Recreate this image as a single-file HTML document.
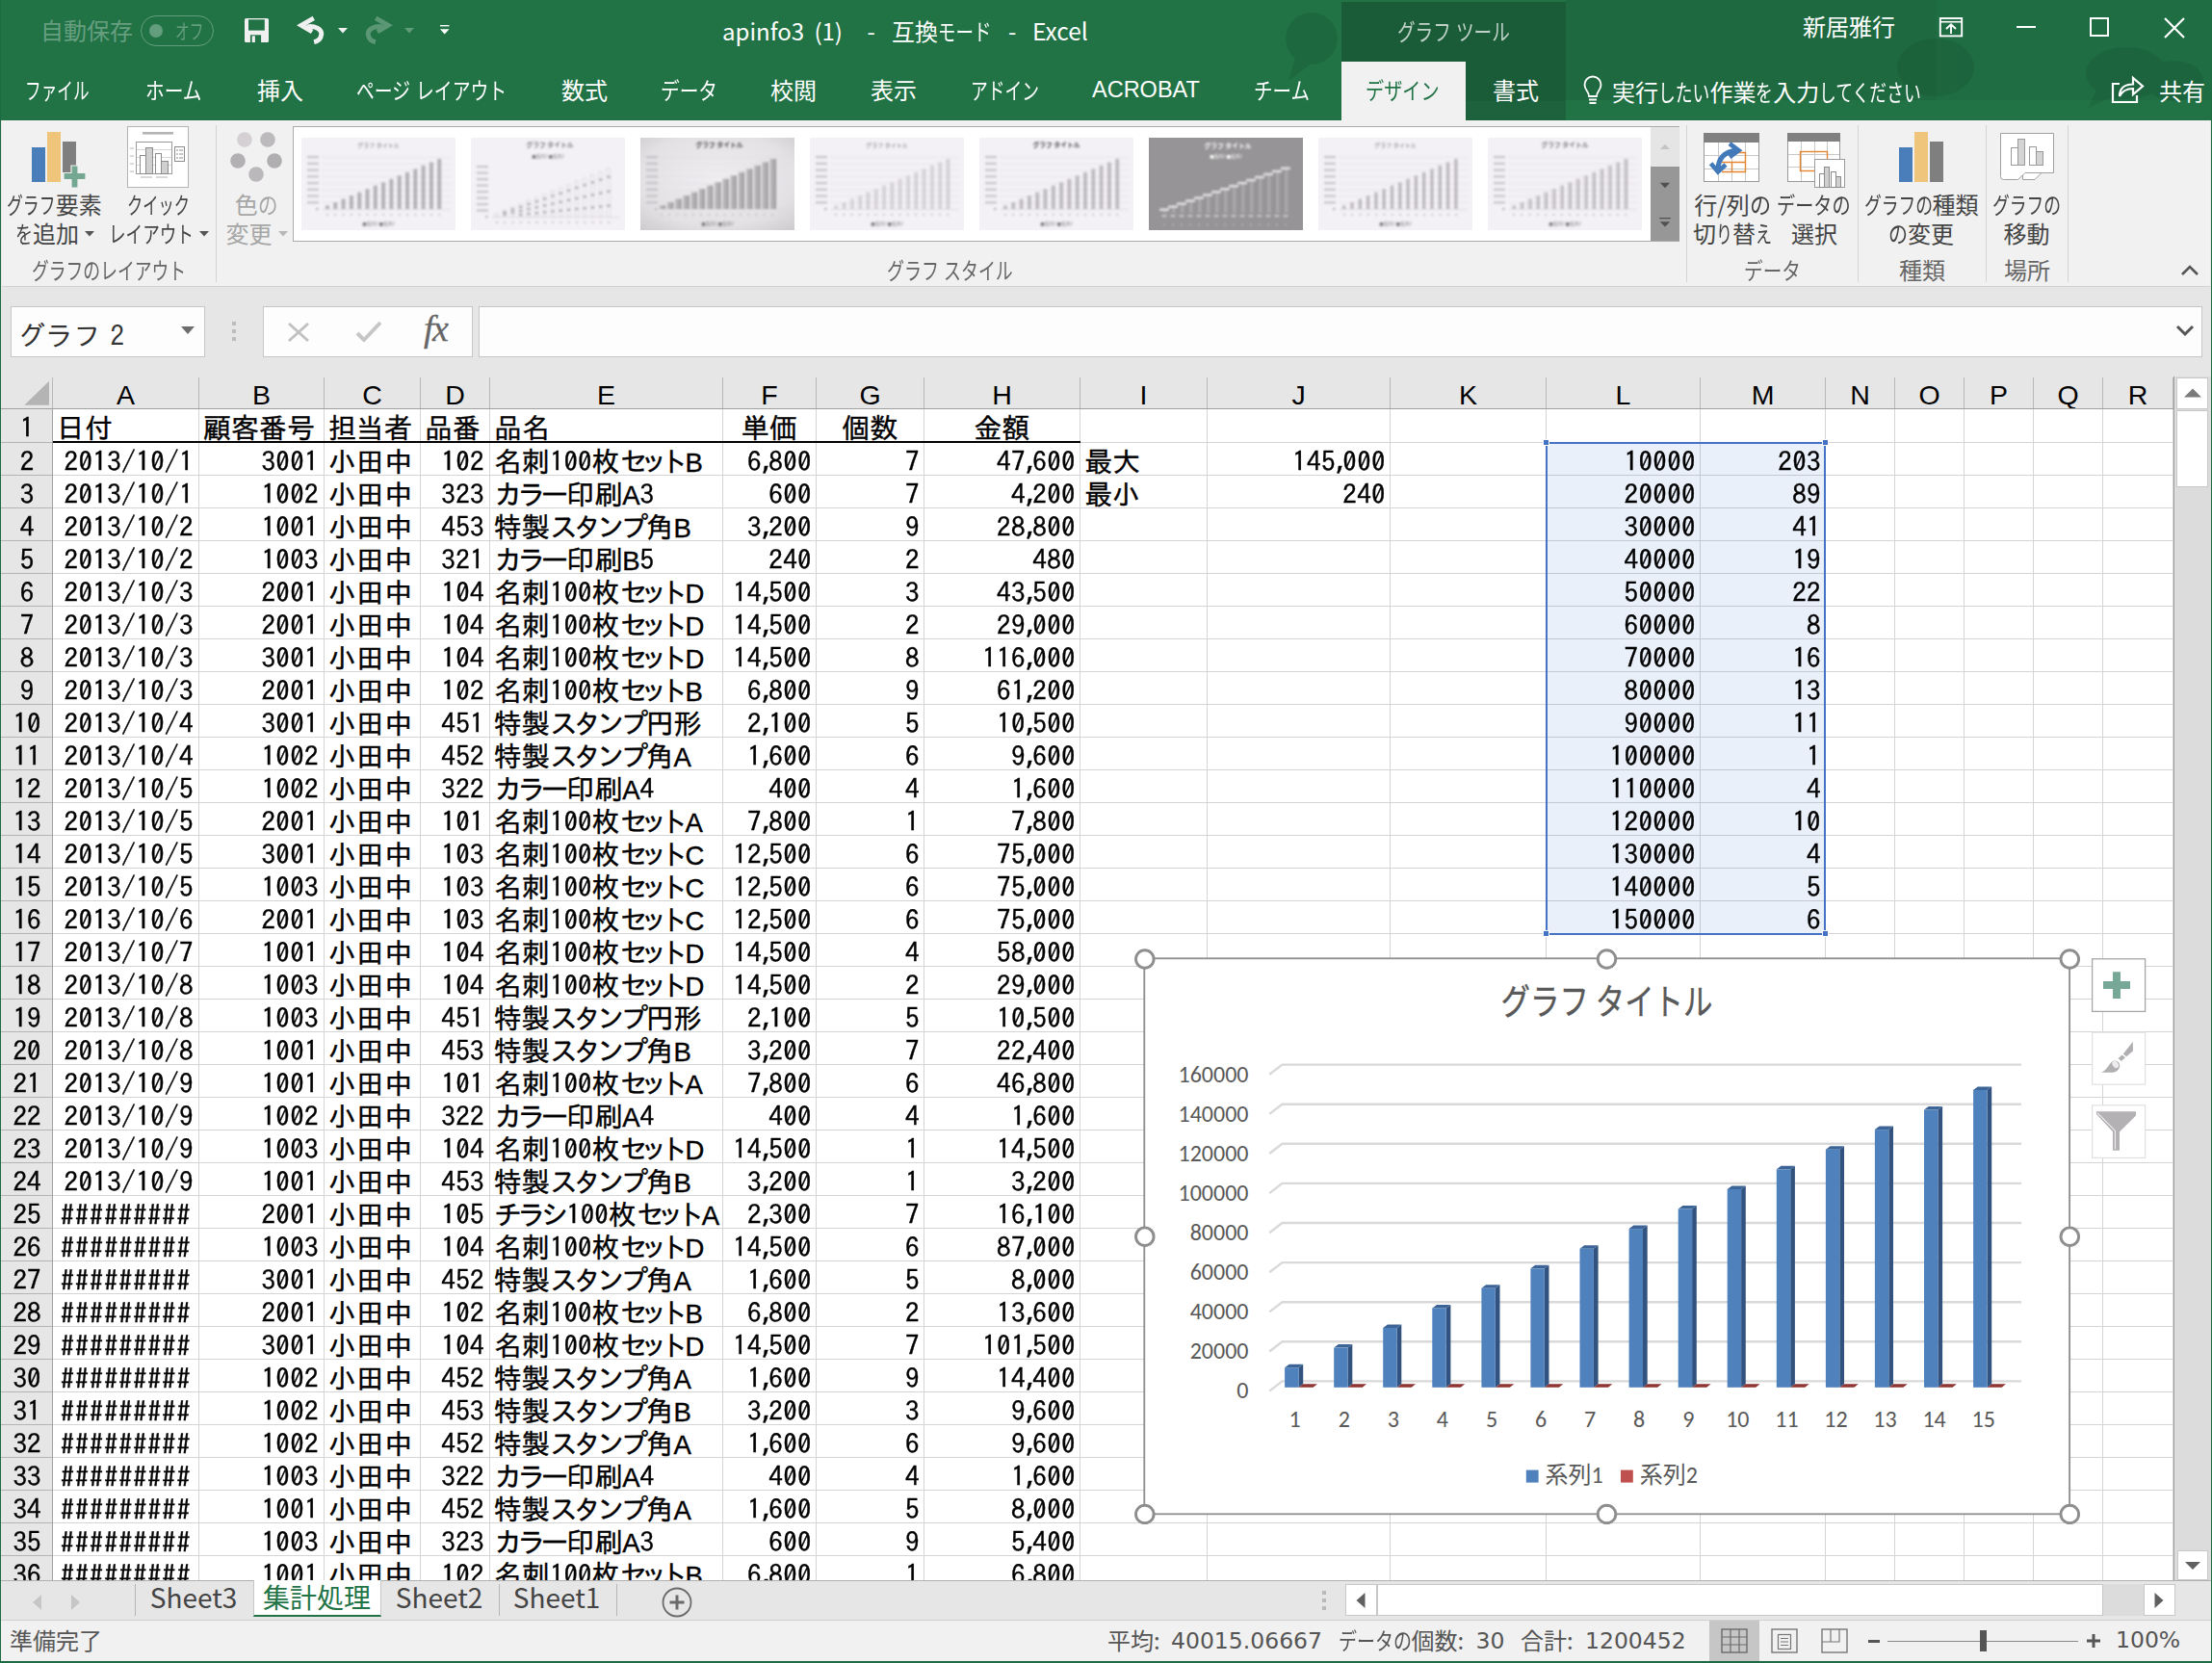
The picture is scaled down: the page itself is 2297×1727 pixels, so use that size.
<!DOCTYPE html><html lang="ja"><head><meta charset="utf-8"><title>Excel</title><style>
html,body{margin:0;padding:0}
body{width:2297px;height:1727px;position:relative;overflow:hidden;background:#e6e6e6;font-family:"Liberation Sans","Noto Sans CJK JP",sans-serif;font-size:24px;color:#444}
div,span,svg{box-sizing:border-box}
.a{position:absolute}
.k{display:inline-block;transform-origin:0 50%;white-space:nowrap;vertical-align:baseline}
.ui{font-family:"Noto Sans CJK JP","Liberation Sans",sans-serif;white-space:nowrap}
.t{position:absolute;white-space:nowrap;line-height:1}
.tab{position:absolute;top:78px;height:30px;line-height:30px;color:#fff;font-size:24px;white-space:nowrap;font-family:"Noto Sans CJK JP","Liberation Sans",sans-serif}
.rl{position:absolute;white-space:nowrap;text-align:center;font-size:24px;line-height:30px;color:#444;font-family:"Noto Sans CJK JP","Liberation Sans",sans-serif}
.gl{position:absolute;white-space:nowrap;text-align:center;font-size:24px;line-height:30px;color:#666;font-family:"Noto Sans CJK JP","Liberation Sans",sans-serif}
.sep{position:absolute;top:130px;height:163px;width:1px;background:#d4d4d4}
.g{font-family:"IPAGothic","Noto Sans CJK JP",monospace;font-size:29px;color:#000}
.c,.rh{-webkit-text-stroke:.38px #000}
.c{position:absolute;height:34px;line-height:38px;white-space:nowrap;overflow:hidden;padding:0 4px 0 4px;font-family:"IPAGothic","Noto Sans CJK JP",monospace;font-size:29px;color:#000}
.r{text-align:right}
.l{text-align:left}
.m{text-align:center}
.kk{letter-spacing:-4.600px;margin-right:2px}
.k2{letter-spacing:-8px;margin-right:5px}
.cm{letter-spacing:-7px}
.n,.rh{transform:scaleY(.92)}
.n{letter-spacing:.4px}
.dg{display:inline-block;transform:scaleY(.92)}
.hs{letter-spacing:.55px;display:inline-block;transform:scaleY(.82);transform-origin:50% 50%}
.la{font-family:"Liberation Sans",sans-serif;font-size:27.500px}
.vl{position:absolute;width:1px;background:#d4d4d4}
.hl{position:absolute;height:1px;background:#d4d4d4}
.ch{position:absolute;top:0;height:33px;line-height:38px;text-align:center;font-family:"Liberation Sans",sans-serif;font-size:28.500px;color:#000}
.rh{position:absolute;left:2px;width:52px;height:34px;line-height:38px;text-align:center;font-family:"IPAGothic",monospace;font-size:29px;color:#000}
</style></head><body><div class="a" style="left:0;top:0;width:2297px;height:125px;background:#217346;overflow:hidden"><svg class="a" style="left:1300px;top:0" width="997" height="125" viewBox="1300 0 997 125"><g fill="#000" opacity=".085"><circle cx="1362" cy="40" r="27"/><path d="M1345 60L1338 84L1362 66Z"/><rect x="1626" y="0" width="384" height="104"/></g><g fill="#000" opacity=".05"><rect x="2010" y="0" width="287" height="104"/></g><g fill="#000" opacity=".07"><ellipse cx="2208" cy="76" rx="42" ry="27"/><path d="M2178 92L2168 112L2196 100Z"/><ellipse cx="2258" cy="84" rx="30" ry="21"/><ellipse cx="2010" cy="70" rx="40" ry="30"/></g></svg><div class="a" style="left:1393px;top:2px;width:233px;height:123px;background:linear-gradient(180deg,rgba(0,0,0,.2) 0,rgba(0,0,0,.2) 103px,rgba(0,0,0,.15) 103px,rgba(0,0,0,.15) 100%)"></div><div class="a" style="left:1393px;top:64px;width:129px;height:61px;background:#f1f1f1"></div></div><div class="t ui" style="left:42px;top:18.500px;font-size:24px;color:rgba(255,255,255,.32)">自動保存</div><div class="a" style="left:146px;top:16px;width:76px;height:32px;border:1.5px solid rgba(255,255,255,.3);border-radius:16px"></div><div class="a" style="left:155px;top:25px;width:14px;height:14px;border-radius:7px;background:rgba(255,255,255,.3)"></div><div class="t ui" style="left:182px;top:21px;font-size:21px;color:rgba(255,255,255,.3)"><span class="k" style="width:29.4px;transform:scaleX(0.700)">オフ</span></div><svg class="a" style="left:254px;top:19px" width="26" height="26" viewBox="0 0 26 26"><rect x="0" y="0" width="25" height="25" rx="1.500" fill="#f0f0f0"/><rect x="4" y="1.300" width="16.800" height="11.300" fill="#217346"/><rect x="5.900" y="17.300" width="11.200" height="7.700" fill="#217346"/><rect x="7.700" y="18.300" width="3.200" height="6.700" fill="#f0f0f0"/></svg><svg class="a" style="left:308px;top:16px" width="32" height="30" viewBox="0 0 32 30"><path d="M17.800 2.900L4.900 10.200L16.100 17" fill="none" stroke="#f0f0f0" stroke-width="4.900" stroke-linejoin="miter"/><path d="M10.800 12C18.400 10.200 26.600 14.300 25.700 19.800C25.200 24.300 22 26.800 18.100 27.600" fill="none" stroke="#f0f0f0" stroke-width="4.900"/></svg><svg class="a" style="left:351px;top:29px" width="11" height="7"><path d="M0 0H10L5 5.500Z" fill="#f0f0f0"/></svg><svg class="a" style="left:376px;top:16px;opacity:.28" width="32" height="30" viewBox="0 0 32 30"><g transform="translate(32,0) scale(-1,1)"><path d="M17.800 2.900L4.900 10.200L16.100 17" fill="none" stroke="#f0f0f0" stroke-width="4.900" stroke-linejoin="miter"/><path d="M10.800 12C18.400 10.200 26.600 14.300 25.700 19.800C25.200 24.300 22 26.800 18.100 27.600" fill="none" stroke="#f0f0f0" stroke-width="4.900"/></g></svg><svg class="a" style="left:420px;top:29px;opacity:.28" width="11" height="7"><path d="M0 0H10L5 5.500Z" fill="#fff"/></svg><svg class="a" style="left:456px;top:25px" width="12" height="12"><rect x="1" y="1" width="9.500" height="1.400" fill="#fff"/><path d="M1 5.200H10.500L5.750 10.500Z" fill="#fff"/></svg><div class="t ui" style="left:750px;top:20px;font-size:24px;color:#fff;word-spacing:5px">apinfo3 (1)</div><div class="t ui" style="left:900.500px;top:20px;font-size:24px;color:#fff">-</div><div class="t ui" style="left:926px;top:20px;font-size:24px;color:#fff">互換<span class="k" style="width:55.5px;transform:scaleX(0.771)">モード</span></div><div class="t ui" style="left:1047px;top:20px;font-size:24px;color:#fff">-</div><div class="t ui" style="left:1072px;top:20px;font-size:24.500px;color:#fff">Excel</div><div class="t ui" style="left:1451px;top:20px;font-size:24px;color:rgba(255,255,255,.72)"><span class="k" style="width:55.8px;transform:scaleX(0.775)">グラフ</span> <span class="k" style="width:55.8px;transform:scaleX(0.775)">ツール</span></div><div class="t ui" style="left:1872px;top:15px;font-size:24px;color:#fff">新居雅行</div><svg class="a" style="left:2013px;top:17px" width="26" height="22" viewBox="0 0 26 22"><rect x="1.8" y="2" width="22.4" height="18.4" fill="none" stroke="#fff" stroke-width="1.9"/><path d="M1.8 5.7H24.2" stroke="#fff" stroke-width="1.6"/><path d="M13 18V8.5M8 13L13 8.2L18 13" fill="none" stroke="#fff" stroke-width="1.9"/></svg><div class="a" style="left:2094px;top:27px;width:20px;height:2px;background:#fff"></div><div class="a" style="left:2170px;top:18px;width:20px;height:20px;border:2px solid #fff"></div><svg class="a" style="left:2247px;top:18px" width="22" height="22"><path d="M1 1L21 21M21 1L1 21" stroke="#fff" stroke-width="2.2"/></svg><div class="tab" style="left:25.5px"><span class="k" style="width:66.5px;transform:scaleX(0.693)">ファイル</span></div><div class="tab" style="left:150.5px"><span class="k" style="width:59.0px;transform:scaleX(0.819)">ホーム</span></div><div class="tab" style="left:267.0px">挿入</div><div class="tab" style="left:370.0px"><span class="k" style="width:56.5px;transform:scaleX(0.784)">ページ</span> <span class="k" style="width:94.1px;transform:scaleX(0.784)">レイアウト</span></div><div class="tab" style="left:583.0px">数式</div><div class="tab" style="left:686.0px"><span class="k" style="width:59.0px;transform:scaleX(0.819)">データ</span></div><div class="tab" style="left:800.0px">校閲</div><div class="tab" style="left:904.0px">表示</div><div class="tab" style="left:1007.5px"><span class="k" style="width:71.0px;transform:scaleX(0.740)">アドイン</span></div><div class="tab" style="left:1134.0px;font-family:'Liberation Sans',sans-serif;font-size:23.500px">ACROBAT</div><div class="tab" style="left:1302.0px"><span class="k" style="width:58.5px;transform:scaleX(0.812)">チーム</span></div><div class="tab" style="left:1418px;color:#217346"><span class="k" style="width:76.5px;transform:scaleX(0.797)">デザイン</span></div><div class="tab" style="left:1550px">書式</div><svg class="a" style="left:1643px;top:78px" width="22" height="32" viewBox="0 0 22 32"><path d="M7 22C7 17 2.5 15.5 2.5 10A8.5 8.5 0 0 1 19.500 10C19.5 15.5 15 17 15 22Z" fill="none" stroke="#fff" stroke-width="1.8"/><path d="M7 25.500H15M7.500 29H14.500" stroke="#fff" stroke-width="1.8"/></svg><div class="tab" style="left:1674px;top:80px">実行<span class="k" style="width:53.4px;transform:scaleX(0.742)">したい</span>作業<span class="k" style="width:17.8px;transform:scaleX(0.742)">を</span>入力<span class="k" style="width:106.8px;transform:scaleX(0.742)">してください</span></div><svg class="a" style="left:2192px;top:78px" width="36" height="30" viewBox="0 0 36 30"><path d="M9 9H2V28H27V21" fill="none" stroke="#fff" stroke-width="2.2"/><path d="M9 22C9 13 15 9.500 23 9.500V3L33 11.500L23 20V14C16 14 12 16 9 22Z" fill="none" stroke="#fff" stroke-width="2.2" stroke-linejoin="miter"/></svg><div class="tab" style="left:2242px;top:79px">共有</div><div class="a" style="left:2px;top:125px;width:2293px;height:172px;background:#f1f1f1"></div><div class="a" style="left:2px;top:297px;width:2293px;height:1px;background:#d2d2d2"></div><svg class="a" style="left:30px;top:134px" width="62" height="64" viewBox="0 0 62 64"><rect x="3" y="19" width="14" height="36" fill="#4a7ebb"/><rect x="19" y="3" width="14" height="52" fill="#eec57a"/><rect x="35" y="13" width="14" height="32" fill="#7f7f7f"/><path d="M36 45.500H44V38H51V45.500H59V52.500H51V61H44V52.500H36Z" fill="#74a893" stroke="#f1f1f1" stroke-width="1.2"/></svg><div class="rl" style="left:-63.5px;top:196.5px;width:240px;"><span class="k" style="width:50.5px;transform:scaleX(0.701)">グラフ</span>要素</div><div class="rl" style="left:-63.0px;top:227.0px;width:240px;"><span class="k" style="width:18.0px;transform:scaleX(0.750)">を</span>追加<svg width="10" height="6" style="margin-left:6px;vertical-align:middle;position:relative;top:-2px"><path d="M0 0H10L5 5.5Z" fill="#555"/></svg></div><svg class="a" style="left:132px;top:131px" width="64" height="64" viewBox="0 0 64 64"><rect x=".5" y=".5" width="63" height="63" fill="#fff" stroke="#b4b4b4"/><rect x="16" y="6" width="32" height="2.600" fill="#b4b4b4"/><rect x="9.500" y="16.500" width="37" height="33" fill="#fff" stroke="#9a9a9a"/><path d="M10 24.500H46M10 32.500H46M10 40.500H46" stroke="#d8d8d8"/><rect x="13.500" y="30.500" width="6" height="19" fill="#fff" stroke="#8c8c8c"/><rect x="19.500" y="22.500" width="7" height="27" fill="#d0d0d0" stroke="#8c8c8c"/><rect x="29.500" y="28.500" width="6" height="21" fill="#fff" stroke="#8c8c8c"/><rect x="35.500" y="36.500" width="7" height="13" fill="#d0d0d0" stroke="#8c8c8c"/><path d="M3 23H7M3 31H7M3 39H7M3 47H7M14 53H26M30 53H42" stroke="#b4b4b4"/><rect x="49.500" y="21.500" width="10" height="15" fill="#fff" stroke="#8c8c8c"/><path d="M51 25H53M54 25H58M51 29H53M54 29H58M51 33H53M54 33H58" stroke="#8c8c8c"/></svg><div class="rl" style="left:44.5px;top:196.5px;width:240px;"><span class="k" style="width:65.0px;transform:scaleX(0.677)">クイック</span></div><div class="rl" style="left:44.5px;top:227.0px;width:240px;"><span class="k" style="width:88.0px;transform:scaleX(0.733)">レイアウト</span><svg width="10" height="6" style="margin-left:6px;vertical-align:middle;position:relative;top:-2px"><path d="M0 0H10L5 5.5Z" fill="#555"/></svg></div><div class="sep" style="left:224px"></div><svg class="a" style="left:236px;top:134px" width="60" height="58" viewBox="0 0 60 58"><circle cx="18" cy="11" r="7.800" fill="#d4d0d4"/><circle cx="42" cy="11" r="7.800" fill="#bcbabc"/><circle cx="11" cy="33" r="7.800" fill="#b2b0b2"/><circle cx="49" cy="33" r="7.800" fill="#b0aeb0"/><circle cx="30" cy="47" r="7.800" fill="#bab8ba"/></svg><div class="rl" style="left:146.0px;top:196.5px;width:240px;color:#a6a6a6">色<span class="k" style="width:20.5px;transform:scaleX(0.854)">の</span></div><div class="rl" style="left:146.5px;top:227.0px;width:240px;color:#a6a6a6">変更<svg width="10" height="6" style="margin-left:6px;vertical-align:middle;position:relative;top:-2px"><path d="M0 0H10L5 5.5Z" fill="#b8b8b8"/></svg></div><div class="gl" style="left:-7.0px;top:265.0px;width:240px;"><span class="k" style="width:160.0px;transform:scaleX(0.741)">グラフのレイアウト</span></div><div class="gl" style="left:866.0px;top:265.0px;width:240px;"><span class="k" style="width:53.8px;transform:scaleX(0.748)">グラフ</span> <span class="k" style="width:71.8px;transform:scaleX(0.748)">スタイル</span></div><div class="gl" style="left:1720.0px;top:265.0px;width:240px;"><span class="k" style="width:59.0px;transform:scaleX(0.819)">データ</span></div><div class="gl" style="left:1876.0px;top:265.0px;width:240px;">種類</div><div class="gl" style="left:1985.0px;top:265.0px;width:240px;">場所</div><div class="a" style="left:304px;top:131px;width:1440px;height:120px;background:#fff;border:1px solid #ababab"></div><div class="a" style="left:1714px;top:132px;width:30px;height:41px;background:#e5e5e5"></div><div class="a" style="left:1714px;top:173px;width:30px;height:77px;background:#979797"></div><svg class="a" style="left:1714px;top:132px" width="30" height="118"><path d="M10 23H20L15 17.8Z" fill="#c4c4c4"/><path d="M9.8 57.8H20.2L15 63.2Z" fill="#505050"/><path d="M9.2 94H20.8V95.2H9.2ZM9.8 98.2H20.2L15 103.4Z" fill="#505050"/></svg><svg class="a" style="left:313px;top:143px" width="160" height="96" viewBox="0 0 160 96"><rect width="160" height="96" fill="#f4f1f6"/><g style="filter:blur(.85px)"><text x="80" y="9.5" text-anchor="middle" font-size="6.0" fill="#7d7a7f" font-family="'Noto Sans CJK JP',sans-serif">グラフ タイトル</text><rect x="6" y="19.0" width="12" height="2.200" fill="#bcb9be" opacity=".8"/><rect x="22" y="20.0" width="132" height=".700" fill="#e2dfe4"/><rect x="6" y="25.8" width="12" height="2.200" fill="#bcb9be" opacity=".8"/><rect x="22" y="26.8" width="132" height=".700" fill="#e2dfe4"/><rect x="6" y="32.5" width="12" height="2.200" fill="#bcb9be" opacity=".8"/><rect x="22" y="33.5" width="132" height=".700" fill="#e2dfe4"/><rect x="6" y="39.2" width="12" height="2.200" fill="#bcb9be" opacity=".8"/><rect x="22" y="40.2" width="132" height=".700" fill="#e2dfe4"/><rect x="6" y="46.0" width="12" height="2.200" fill="#bcb9be" opacity=".8"/><rect x="22" y="47.0" width="132" height=".700" fill="#e2dfe4"/><rect x="6" y="52.8" width="12" height="2.200" fill="#bcb9be" opacity=".8"/><rect x="22" y="53.8" width="132" height=".700" fill="#e2dfe4"/><rect x="6" y="59.5" width="12" height="2.200" fill="#bcb9be" opacity=".8"/><rect x="22" y="60.5" width="132" height=".700" fill="#e2dfe4"/><rect x="6" y="66.2" width="12" height="2.200" fill="#bcb9be" opacity=".8"/><rect x="22" y="67.2" width="132" height=".700" fill="#e2dfe4"/><rect x="15" y="73.0" width="2.500" height="2.200" fill="#bcb9be"/><rect x="22" y="74.0" width="132" height=".700" fill="#d6d3d8"/><rect x="25.0" y="70.5" width="4.0" height="3.5" fill="#b4b1b6"/><rect x="26.0" y="79.0" width="2" height="1.800" fill="#c6c3c8"/><rect x="33.3" y="67.1" width="4.0" height="6.9" fill="#b4b1b6"/><rect x="34.3" y="79.0" width="2" height="1.800" fill="#c6c3c8"/><rect x="41.6" y="63.6" width="4.0" height="10.4" fill="#b4b1b6"/><rect x="42.6" y="79.0" width="2" height="1.800" fill="#c6c3c8"/><rect x="49.9" y="60.1" width="4.0" height="13.9" fill="#b4b1b6"/><rect x="50.9" y="79.0" width="2" height="1.800" fill="#c6c3c8"/><rect x="58.2" y="56.7" width="4.0" height="17.3" fill="#b4b1b6"/><rect x="59.2" y="79.0" width="2" height="1.800" fill="#c6c3c8"/><rect x="66.5" y="53.2" width="4.0" height="20.8" fill="#b4b1b6"/><rect x="67.5" y="79.0" width="2" height="1.800" fill="#c6c3c8"/><rect x="74.8" y="49.7" width="4.0" height="24.3" fill="#b4b1b6"/><rect x="75.8" y="79.0" width="2" height="1.800" fill="#c6c3c8"/><rect x="83.1" y="46.3" width="4.0" height="27.7" fill="#b4b1b6"/><rect x="84.1" y="79.0" width="2" height="1.800" fill="#c6c3c8"/><rect x="91.4" y="42.8" width="4.0" height="31.2" fill="#b4b1b6"/><rect x="92.4" y="79.0" width="2" height="1.800" fill="#c6c3c8"/><rect x="99.7" y="39.3" width="4.0" height="34.7" fill="#b4b1b6"/><rect x="100.7" y="79.0" width="2" height="1.800" fill="#c6c3c8"/><rect x="108.0" y="35.9" width="4.0" height="38.1" fill="#b4b1b6"/><rect x="109.0" y="79.0" width="2" height="1.800" fill="#c6c3c8"/><rect x="116.3" y="32.4" width="4.0" height="41.6" fill="#b4b1b6"/><rect x="117.3" y="79.0" width="2" height="1.800" fill="#c6c3c8"/><rect x="124.6" y="28.9" width="4.0" height="45.1" fill="#b4b1b6"/><rect x="125.6" y="79.0" width="2" height="1.800" fill="#c6c3c8"/><rect x="132.9" y="25.5" width="4.0" height="48.5" fill="#b4b1b6"/><rect x="133.9" y="79.0" width="2" height="1.800" fill="#c6c3c8"/><rect x="141.2" y="22.0" width="4.0" height="52.0" fill="#b4b1b6"/><rect x="142.2" y="79.0" width="2" height="1.800" fill="#c6c3c8"/><text x="80" y="90.500" text-anchor="middle" font-size="4.600" fill="#7d7a7f" font-family="'Noto Sans CJK JP',sans-serif">■系列1 ■系列2</text></g></svg><svg class="a" style="left:489px;top:143px" width="160" height="96" viewBox="0 0 160 96"><rect width="160" height="96" fill="#f4f1f6"/><g style="filter:blur(.85px)"><text x="82" y="9.5" text-anchor="middle" font-size="6.8" font-weight="bold" fill="#7d7a7f" font-family="'Noto Sans CJK JP',sans-serif">グラフ タイトル</text><text x="80" y="21" text-anchor="middle" font-size="4.600" fill="#7d7a7f" font-family="'Noto Sans CJK JP',sans-serif">■系列1 ■系列2</text><rect x="6" y="29.0" width="12" height="2.200" fill="#bcb9be" opacity=".8"/><rect x="6" y="35.5" width="12" height="2.200" fill="#bcb9be" opacity=".8"/><rect x="6" y="42.0" width="12" height="2.200" fill="#bcb9be" opacity=".8"/><rect x="6" y="48.5" width="12" height="2.200" fill="#bcb9be" opacity=".8"/><rect x="6" y="55.0" width="12" height="2.200" fill="#bcb9be" opacity=".8"/><rect x="6" y="61.5" width="12" height="2.200" fill="#bcb9be" opacity=".8"/><rect x="6" y="68.0" width="12" height="2.200" fill="#bcb9be" opacity=".8"/><rect x="6" y="74.5" width="12" height="2.200" fill="#bcb9be" opacity=".8"/><rect x="15" y="81.0" width="2.500" height="2.200" fill="#bcb9be"/><rect x="22" y="82.0" width="132" height=".700" fill="#d6d3d8"/><rect x="25.0" y="78.7" width="3.600" height="3.3" fill="none" stroke="#b5b2b7" stroke-width=".800" stroke-dasharray="1.200 1.600" opacity=".9"/><rect x="26.0" y="87.0" width="2" height="1.800" fill="#c6c3c8"/><rect x="33.3" y="75.3" width="3.600" height="6.7" fill="none" stroke="#b5b2b7" stroke-width=".800" stroke-dasharray="1.200 1.600" opacity=".9"/><rect x="33.5" y="78.3" width="3.200" height="2.400" fill="#98959a" opacity=".7"/><rect x="33.5" y="76.3" width="3.200" height="2.400" fill="#98959a" opacity=".7"/><rect x="34.3" y="87.0" width="2" height="1.800" fill="#c6c3c8"/><rect x="41.6" y="72.0" width="3.600" height="10.0" fill="none" stroke="#b5b2b7" stroke-width=".800" stroke-dasharray="1.200 1.600" opacity=".9"/><rect x="41.8" y="76.5" width="3.200" height="2.400" fill="#98959a" opacity=".7"/><rect x="41.8" y="73.5" width="3.200" height="2.400" fill="#98959a" opacity=".7"/><rect x="42.6" y="87.0" width="2" height="1.800" fill="#c6c3c8"/><rect x="49.9" y="68.7" width="3.600" height="13.3" fill="none" stroke="#b5b2b7" stroke-width=".800" stroke-dasharray="1.200 1.600" opacity=".9"/><rect x="50.1" y="78.7" width="3.200" height="2.400" fill="#98959a" opacity=".7"/><rect x="50.1" y="74.7" width="3.200" height="2.400" fill="#98959a" opacity=".7"/><rect x="50.1" y="70.7" width="3.200" height="2.400" fill="#98959a" opacity=".7"/><rect x="50.9" y="87.0" width="2" height="1.800" fill="#c6c3c8"/><rect x="58.2" y="65.3" width="3.600" height="16.7" fill="none" stroke="#b5b2b7" stroke-width=".800" stroke-dasharray="1.200 1.600" opacity=".9"/><rect x="58.4" y="77.8" width="3.200" height="2.400" fill="#98959a" opacity=".7"/><rect x="58.4" y="72.8" width="3.200" height="2.400" fill="#98959a" opacity=".7"/><rect x="58.4" y="67.8" width="3.200" height="2.400" fill="#98959a" opacity=".7"/><rect x="59.2" y="87.0" width="2" height="1.800" fill="#c6c3c8"/><rect x="66.5" y="62.0" width="3.600" height="20.0" fill="none" stroke="#b5b2b7" stroke-width=".800" stroke-dasharray="1.200 1.600" opacity=".9"/><rect x="66.7" y="77.0" width="3.200" height="2.400" fill="#98959a" opacity=".7"/><rect x="66.7" y="71.0" width="3.200" height="2.400" fill="#98959a" opacity=".7"/><rect x="66.7" y="65.0" width="3.200" height="2.400" fill="#98959a" opacity=".7"/><rect x="67.5" y="87.0" width="2" height="1.800" fill="#c6c3c8"/><rect x="74.8" y="58.7" width="3.600" height="23.3" fill="none" stroke="#b5b2b7" stroke-width=".800" stroke-dasharray="1.200 1.600" opacity=".9"/><rect x="75.0" y="76.2" width="3.200" height="2.400" fill="#98959a" opacity=".7"/><rect x="75.0" y="69.2" width="3.200" height="2.400" fill="#98959a" opacity=".7"/><rect x="75.0" y="62.2" width="3.200" height="2.400" fill="#98959a" opacity=".7"/><rect x="75.8" y="87.0" width="2" height="1.800" fill="#c6c3c8"/><rect x="83.1" y="55.3" width="3.600" height="26.7" fill="none" stroke="#b5b2b7" stroke-width=".800" stroke-dasharray="1.200 1.600" opacity=".9"/><rect x="83.3" y="75.3" width="3.200" height="2.400" fill="#98959a" opacity=".7"/><rect x="83.3" y="67.3" width="3.200" height="2.400" fill="#98959a" opacity=".7"/><rect x="83.3" y="59.3" width="3.200" height="2.400" fill="#98959a" opacity=".7"/><rect x="84.1" y="87.0" width="2" height="1.800" fill="#c6c3c8"/><rect x="91.4" y="52.0" width="3.600" height="30.0" fill="none" stroke="#b5b2b7" stroke-width=".800" stroke-dasharray="1.200 1.600" opacity=".9"/><rect x="91.6" y="74.5" width="3.200" height="2.400" fill="#98959a" opacity=".7"/><rect x="91.6" y="65.5" width="3.200" height="2.400" fill="#98959a" opacity=".7"/><rect x="91.6" y="56.5" width="3.200" height="2.400" fill="#98959a" opacity=".7"/><rect x="92.4" y="87.0" width="2" height="1.800" fill="#c6c3c8"/><rect x="99.7" y="48.7" width="3.600" height="33.3" fill="none" stroke="#b5b2b7" stroke-width=".800" stroke-dasharray="1.200 1.600" opacity=".9"/><rect x="99.9" y="73.7" width="3.200" height="2.400" fill="#98959a" opacity=".7"/><rect x="99.9" y="63.7" width="3.200" height="2.400" fill="#98959a" opacity=".7"/><rect x="99.9" y="53.7" width="3.200" height="2.400" fill="#98959a" opacity=".7"/><rect x="100.7" y="87.0" width="2" height="1.800" fill="#c6c3c8"/><rect x="108.0" y="45.3" width="3.600" height="36.7" fill="none" stroke="#b5b2b7" stroke-width=".800" stroke-dasharray="1.200 1.600" opacity=".9"/><rect x="108.2" y="72.8" width="3.200" height="2.400" fill="#98959a" opacity=".7"/><rect x="108.2" y="61.8" width="3.200" height="2.400" fill="#98959a" opacity=".7"/><rect x="108.2" y="50.8" width="3.200" height="2.400" fill="#98959a" opacity=".7"/><rect x="109.0" y="87.0" width="2" height="1.800" fill="#c6c3c8"/><rect x="116.3" y="42.0" width="3.600" height="40.0" fill="none" stroke="#b5b2b7" stroke-width=".800" stroke-dasharray="1.200 1.600" opacity=".9"/><rect x="116.5" y="72.0" width="3.200" height="2.400" fill="#98959a" opacity=".7"/><rect x="116.5" y="60.0" width="3.200" height="2.400" fill="#98959a" opacity=".7"/><rect x="116.5" y="48.0" width="3.200" height="2.400" fill="#98959a" opacity=".7"/><rect x="117.3" y="87.0" width="2" height="1.800" fill="#c6c3c8"/><rect x="124.6" y="38.7" width="3.600" height="43.3" fill="none" stroke="#b5b2b7" stroke-width=".800" stroke-dasharray="1.200 1.600" opacity=".9"/><rect x="124.8" y="71.2" width="3.200" height="2.400" fill="#98959a" opacity=".7"/><rect x="124.8" y="58.2" width="3.200" height="2.400" fill="#98959a" opacity=".7"/><rect x="124.8" y="45.2" width="3.200" height="2.400" fill="#98959a" opacity=".7"/><rect x="125.6" y="87.0" width="2" height="1.800" fill="#c6c3c8"/><rect x="132.9" y="35.3" width="3.600" height="46.7" fill="none" stroke="#b5b2b7" stroke-width=".800" stroke-dasharray="1.200 1.600" opacity=".9"/><rect x="133.1" y="70.3" width="3.200" height="2.400" fill="#98959a" opacity=".7"/><rect x="133.1" y="56.3" width="3.200" height="2.400" fill="#98959a" opacity=".7"/><rect x="133.1" y="42.3" width="3.200" height="2.400" fill="#98959a" opacity=".7"/><rect x="133.9" y="87.0" width="2" height="1.800" fill="#c6c3c8"/><rect x="141.2" y="32.0" width="3.600" height="50.0" fill="none" stroke="#b5b2b7" stroke-width=".800" stroke-dasharray="1.200 1.600" opacity=".9"/><rect x="141.4" y="69.5" width="3.200" height="2.400" fill="#98959a" opacity=".7"/><rect x="141.4" y="54.5" width="3.200" height="2.400" fill="#98959a" opacity=".7"/><rect x="141.4" y="39.5" width="3.200" height="2.400" fill="#98959a" opacity=".7"/><rect x="142.2" y="87.0" width="2" height="1.800" fill="#c6c3c8"/></g></svg><svg class="a" style="left:665px;top:143px" width="160" height="96" viewBox="0 0 160 96"><defs><radialGradient id="tg" cx="50%" cy="45%" r="78%"><stop offset="0" stop-color="#f0eef1"/><stop offset=".65" stop-color="#e3e1e4"/><stop offset="1" stop-color="#c9c7ca"/></radialGradient></defs><rect width="160" height="96" fill="url(#tg)"/><g style="filter:blur(.85px)"><text x="82" y="9.5" text-anchor="middle" font-size="6.8" font-weight="bold" fill="#4a484a" font-family="'Noto Sans CJK JP',sans-serif">グラフ タイトル</text><rect x="6" y="19.0" width="12" height="2.200" fill="#bcb9be" opacity=".8"/><rect x="22" y="20.0" width="132" height=".700" fill="#e2dfe4"/><rect x="6" y="25.8" width="12" height="2.200" fill="#bcb9be" opacity=".8"/><rect x="22" y="26.8" width="132" height=".700" fill="#e2dfe4"/><rect x="6" y="32.5" width="12" height="2.200" fill="#bcb9be" opacity=".8"/><rect x="22" y="33.5" width="132" height=".700" fill="#e2dfe4"/><rect x="6" y="39.2" width="12" height="2.200" fill="#bcb9be" opacity=".8"/><rect x="22" y="40.2" width="132" height=".700" fill="#e2dfe4"/><rect x="6" y="46.0" width="12" height="2.200" fill="#bcb9be" opacity=".8"/><rect x="22" y="47.0" width="132" height=".700" fill="#e2dfe4"/><rect x="6" y="52.8" width="12" height="2.200" fill="#bcb9be" opacity=".8"/><rect x="22" y="53.8" width="132" height=".700" fill="#e2dfe4"/><rect x="6" y="59.5" width="12" height="2.200" fill="#bcb9be" opacity=".8"/><rect x="22" y="60.5" width="132" height=".700" fill="#e2dfe4"/><rect x="6" y="66.2" width="12" height="2.200" fill="#bcb9be" opacity=".8"/><rect x="22" y="67.2" width="132" height=".700" fill="#e2dfe4"/><rect x="15" y="73.0" width="2.500" height="2.200" fill="#bcb9be"/><rect x="22" y="74.0" width="132" height=".700" fill="#d6d3d8"/><rect x="20.0" y="70.5" width="6" height="3.5" fill="#b3b1b3"/><rect x="24.4" y="70.5" width="1.600" height="3.5" fill="#979597"/><rect x="21.0" y="79.0" width="2" height="1.800" fill="#c6c3c8"/><rect x="28.2" y="67.1" width="6" height="6.9" fill="#b3b1b3"/><rect x="32.6" y="67.1" width="1.600" height="6.9" fill="#979597"/><rect x="29.2" y="79.0" width="2" height="1.800" fill="#c6c3c8"/><rect x="36.4" y="63.6" width="6" height="10.4" fill="#b3b1b3"/><rect x="40.8" y="63.6" width="1.600" height="10.4" fill="#979597"/><rect x="37.4" y="79.0" width="2" height="1.800" fill="#c6c3c8"/><rect x="44.6" y="60.1" width="6" height="13.9" fill="#b3b1b3"/><rect x="49.0" y="60.1" width="1.600" height="13.9" fill="#979597"/><rect x="45.6" y="79.0" width="2" height="1.800" fill="#c6c3c8"/><rect x="52.8" y="56.7" width="6" height="17.3" fill="#b3b1b3"/><rect x="57.2" y="56.7" width="1.600" height="17.3" fill="#979597"/><rect x="53.8" y="79.0" width="2" height="1.800" fill="#c6c3c8"/><rect x="61.0" y="53.2" width="6" height="20.8" fill="#b3b1b3"/><rect x="65.4" y="53.2" width="1.600" height="20.8" fill="#979597"/><rect x="62.0" y="79.0" width="2" height="1.800" fill="#c6c3c8"/><rect x="69.2" y="49.7" width="6" height="24.3" fill="#b3b1b3"/><rect x="73.6" y="49.7" width="1.600" height="24.3" fill="#979597"/><rect x="70.2" y="79.0" width="2" height="1.800" fill="#c6c3c8"/><rect x="77.4" y="46.3" width="6" height="27.7" fill="#b3b1b3"/><rect x="81.8" y="46.3" width="1.600" height="27.7" fill="#979597"/><rect x="78.4" y="79.0" width="2" height="1.800" fill="#c6c3c8"/><rect x="85.6" y="42.8" width="6" height="31.2" fill="#b3b1b3"/><rect x="90.0" y="42.8" width="1.600" height="31.2" fill="#979597"/><rect x="86.6" y="79.0" width="2" height="1.800" fill="#c6c3c8"/><rect x="93.8" y="39.3" width="6" height="34.7" fill="#b3b1b3"/><rect x="98.2" y="39.3" width="1.600" height="34.7" fill="#979597"/><rect x="94.8" y="79.0" width="2" height="1.800" fill="#c6c3c8"/><rect x="102.0" y="35.9" width="6" height="38.1" fill="#b3b1b3"/><rect x="106.4" y="35.9" width="1.600" height="38.1" fill="#979597"/><rect x="103.0" y="79.0" width="2" height="1.800" fill="#c6c3c8"/><rect x="110.2" y="32.4" width="6" height="41.6" fill="#b3b1b3"/><rect x="114.6" y="32.4" width="1.600" height="41.6" fill="#979597"/><rect x="111.2" y="79.0" width="2" height="1.800" fill="#c6c3c8"/><rect x="118.4" y="28.9" width="6" height="45.1" fill="#b3b1b3"/><rect x="122.8" y="28.9" width="1.600" height="45.1" fill="#979597"/><rect x="119.4" y="79.0" width="2" height="1.800" fill="#c6c3c8"/><rect x="126.6" y="25.5" width="6" height="48.5" fill="#b3b1b3"/><rect x="131.0" y="25.5" width="1.600" height="48.5" fill="#979597"/><rect x="127.6" y="79.0" width="2" height="1.800" fill="#c6c3c8"/><rect x="134.8" y="22.0" width="6" height="52.0" fill="#b3b1b3"/><rect x="139.2" y="22.0" width="1.600" height="52.0" fill="#979597"/><rect x="135.8" y="79.0" width="2" height="1.800" fill="#c6c3c8"/><text x="80" y="90.500" text-anchor="middle" font-size="4.600" fill="#7d7a7f" font-family="'Noto Sans CJK JP',sans-serif">■系列1 ■系列2</text></g></svg><svg class="a" style="left:841px;top:143px" width="160" height="96" viewBox="0 0 160 96"><rect width="160" height="96" fill="#f4f1f6"/><g style="filter:blur(.85px)"><text x="80" y="9.5" text-anchor="middle" font-size="6.0" fill="#7d7a7f" font-family="'Noto Sans CJK JP',sans-serif">グラフ タイトル</text><rect x="6" y="19.0" width="12" height="2.200" fill="#bcb9be" opacity=".8"/><rect x="22" y="20.0" width="132" height=".700" fill="#e2dfe4"/><rect x="6" y="25.8" width="12" height="2.200" fill="#bcb9be" opacity=".8"/><rect x="22" y="26.8" width="132" height=".700" fill="#e2dfe4"/><rect x="6" y="32.5" width="12" height="2.200" fill="#bcb9be" opacity=".8"/><rect x="22" y="33.5" width="132" height=".700" fill="#e2dfe4"/><rect x="6" y="39.2" width="12" height="2.200" fill="#bcb9be" opacity=".8"/><rect x="22" y="40.2" width="132" height=".700" fill="#e2dfe4"/><rect x="6" y="46.0" width="12" height="2.200" fill="#bcb9be" opacity=".8"/><rect x="22" y="47.0" width="132" height=".700" fill="#e2dfe4"/><rect x="6" y="52.8" width="12" height="2.200" fill="#bcb9be" opacity=".8"/><rect x="22" y="53.8" width="132" height=".700" fill="#e2dfe4"/><rect x="6" y="59.5" width="12" height="2.200" fill="#bcb9be" opacity=".8"/><rect x="22" y="60.5" width="132" height=".700" fill="#e2dfe4"/><rect x="6" y="66.2" width="12" height="2.200" fill="#bcb9be" opacity=".8"/><rect x="22" y="67.2" width="132" height=".700" fill="#e2dfe4"/><rect x="15" y="73.0" width="2.500" height="2.200" fill="#bcb9be"/><rect x="22" y="74.0" width="132" height=".700" fill="#d6d3d8"/><rect x="25.0" y="70.5" width="4.0" height="3.5" fill="#cdcacf"/><rect x="25.4" y="70.5" width="1.600" height="3.5" fill="#e8e5ea" opacity=".7"/><rect x="26.0" y="79.0" width="2" height="1.800" fill="#c6c3c8"/><rect x="33.3" y="67.1" width="4.0" height="6.9" fill="#cdcacf"/><rect x="33.7" y="67.1" width="1.600" height="6.9" fill="#e8e5ea" opacity=".7"/><rect x="34.3" y="79.0" width="2" height="1.800" fill="#c6c3c8"/><rect x="41.6" y="63.6" width="4.0" height="10.4" fill="#cdcacf"/><rect x="42.0" y="63.6" width="1.600" height="10.4" fill="#e8e5ea" opacity=".7"/><rect x="42.6" y="79.0" width="2" height="1.800" fill="#c6c3c8"/><rect x="49.9" y="60.1" width="4.0" height="13.9" fill="#cdcacf"/><rect x="50.3" y="60.1" width="1.600" height="13.9" fill="#e8e5ea" opacity=".7"/><rect x="50.9" y="79.0" width="2" height="1.800" fill="#c6c3c8"/><rect x="58.2" y="56.7" width="4.0" height="17.3" fill="#cdcacf"/><rect x="58.6" y="56.7" width="1.600" height="17.3" fill="#e8e5ea" opacity=".7"/><rect x="59.2" y="79.0" width="2" height="1.800" fill="#c6c3c8"/><rect x="66.5" y="53.2" width="4.0" height="20.8" fill="#cdcacf"/><rect x="66.9" y="53.2" width="1.600" height="20.8" fill="#e8e5ea" opacity=".7"/><rect x="67.5" y="79.0" width="2" height="1.800" fill="#c6c3c8"/><rect x="74.8" y="49.7" width="4.0" height="24.3" fill="#cdcacf"/><rect x="75.2" y="49.7" width="1.600" height="24.3" fill="#e8e5ea" opacity=".7"/><rect x="75.8" y="79.0" width="2" height="1.800" fill="#c6c3c8"/><rect x="83.1" y="46.3" width="4.0" height="27.7" fill="#cdcacf"/><rect x="83.5" y="46.3" width="1.600" height="27.7" fill="#e8e5ea" opacity=".7"/><rect x="84.1" y="79.0" width="2" height="1.800" fill="#c6c3c8"/><rect x="91.4" y="42.8" width="4.0" height="31.2" fill="#cdcacf"/><rect x="91.8" y="42.8" width="1.600" height="31.2" fill="#e8e5ea" opacity=".7"/><rect x="92.4" y="79.0" width="2" height="1.800" fill="#c6c3c8"/><rect x="99.7" y="39.3" width="4.0" height="34.7" fill="#cdcacf"/><rect x="100.1" y="39.3" width="1.600" height="34.7" fill="#e8e5ea" opacity=".7"/><rect x="100.7" y="79.0" width="2" height="1.800" fill="#c6c3c8"/><rect x="108.0" y="35.9" width="4.0" height="38.1" fill="#cdcacf"/><rect x="108.4" y="35.9" width="1.600" height="38.1" fill="#e8e5ea" opacity=".7"/><rect x="109.0" y="79.0" width="2" height="1.800" fill="#c6c3c8"/><rect x="116.3" y="32.4" width="4.0" height="41.6" fill="#cdcacf"/><rect x="116.7" y="32.4" width="1.600" height="41.6" fill="#e8e5ea" opacity=".7"/><rect x="117.3" y="79.0" width="2" height="1.800" fill="#c6c3c8"/><rect x="124.6" y="28.9" width="4.0" height="45.1" fill="#cdcacf"/><rect x="125.0" y="28.9" width="1.600" height="45.1" fill="#e8e5ea" opacity=".7"/><rect x="125.6" y="79.0" width="2" height="1.800" fill="#c6c3c8"/><rect x="132.9" y="25.5" width="4.0" height="48.5" fill="#cdcacf"/><rect x="133.3" y="25.5" width="1.600" height="48.5" fill="#e8e5ea" opacity=".7"/><rect x="133.9" y="79.0" width="2" height="1.800" fill="#c6c3c8"/><rect x="141.2" y="22.0" width="4.0" height="52.0" fill="#cdcacf"/><rect x="141.6" y="22.0" width="1.600" height="52.0" fill="#e8e5ea" opacity=".7"/><rect x="142.2" y="79.0" width="2" height="1.800" fill="#c6c3c8"/><text x="80" y="90.500" text-anchor="middle" font-size="4.600" fill="#7d7a7f" font-family="'Noto Sans CJK JP',sans-serif">■系列1 ■系列2</text></g></svg><svg class="a" style="left:1017px;top:143px" width="160" height="96" viewBox="0 0 160 96"><rect width="160" height="96" fill="#f4f1f6"/><g style="filter:blur(.85px)"><text x="80" y="9.5" text-anchor="middle" font-size="6.8" font-weight="bold" fill="#4a484a" font-family="'Noto Sans CJK JP',sans-serif">グラフ タイトル</text><rect x="6" y="19.0" width="12" height="2.200" fill="#bcb9be" opacity=".8"/><rect x="22" y="20.0" width="132" height=".700" fill="#e2dfe4"/><rect x="6" y="25.8" width="12" height="2.200" fill="#bcb9be" opacity=".8"/><rect x="22" y="26.8" width="132" height=".700" fill="#e2dfe4"/><rect x="6" y="32.5" width="12" height="2.200" fill="#bcb9be" opacity=".8"/><rect x="22" y="33.5" width="132" height=".700" fill="#e2dfe4"/><rect x="6" y="39.2" width="12" height="2.200" fill="#bcb9be" opacity=".8"/><rect x="22" y="40.2" width="132" height=".700" fill="#e2dfe4"/><rect x="6" y="46.0" width="12" height="2.200" fill="#bcb9be" opacity=".8"/><rect x="22" y="47.0" width="132" height=".700" fill="#e2dfe4"/><rect x="6" y="52.8" width="12" height="2.200" fill="#bcb9be" opacity=".8"/><rect x="22" y="53.8" width="132" height=".700" fill="#e2dfe4"/><rect x="6" y="59.5" width="12" height="2.200" fill="#bcb9be" opacity=".8"/><rect x="22" y="60.5" width="132" height=".700" fill="#e2dfe4"/><rect x="6" y="66.2" width="12" height="2.200" fill="#bcb9be" opacity=".8"/><rect x="22" y="67.2" width="132" height=".700" fill="#e2dfe4"/><rect x="15" y="73.0" width="2.500" height="2.200" fill="#bcb9be"/><rect x="22" y="74.0" width="132" height=".700" fill="#d6d3d8"/><rect x="25.0" y="70.5" width="4.0" height="3.5" fill="#bebbc0"/><rect x="26.0" y="79.0" width="2" height="1.800" fill="#c6c3c8"/><rect x="33.3" y="67.1" width="4.0" height="6.9" fill="#bebbc0"/><rect x="34.3" y="79.0" width="2" height="1.800" fill="#c6c3c8"/><rect x="41.6" y="63.6" width="4.0" height="10.4" fill="#bebbc0"/><rect x="42.6" y="79.0" width="2" height="1.800" fill="#c6c3c8"/><rect x="49.9" y="60.1" width="4.0" height="13.9" fill="#bebbc0"/><rect x="50.9" y="79.0" width="2" height="1.800" fill="#c6c3c8"/><rect x="58.2" y="56.7" width="4.0" height="17.3" fill="#bebbc0"/><rect x="59.2" y="79.0" width="2" height="1.800" fill="#c6c3c8"/><rect x="66.5" y="53.2" width="4.0" height="20.8" fill="#bebbc0"/><rect x="67.5" y="79.0" width="2" height="1.800" fill="#c6c3c8"/><rect x="74.8" y="49.7" width="4.0" height="24.3" fill="#bebbc0"/><rect x="75.8" y="79.0" width="2" height="1.800" fill="#c6c3c8"/><rect x="83.1" y="46.3" width="4.0" height="27.7" fill="#bebbc0"/><rect x="84.1" y="79.0" width="2" height="1.800" fill="#c6c3c8"/><rect x="91.4" y="42.8" width="4.0" height="31.2" fill="#bebbc0"/><rect x="92.4" y="79.0" width="2" height="1.800" fill="#c6c3c8"/><rect x="99.7" y="39.3" width="4.0" height="34.7" fill="#bebbc0"/><rect x="100.7" y="79.0" width="2" height="1.800" fill="#c6c3c8"/><rect x="108.0" y="35.9" width="4.0" height="38.1" fill="#bebbc0"/><rect x="109.0" y="79.0" width="2" height="1.800" fill="#c6c3c8"/><rect x="116.3" y="32.4" width="4.0" height="41.6" fill="#bebbc0"/><rect x="117.3" y="79.0" width="2" height="1.800" fill="#c6c3c8"/><rect x="124.6" y="28.9" width="4.0" height="45.1" fill="#bebbc0"/><rect x="125.6" y="79.0" width="2" height="1.800" fill="#c6c3c8"/><rect x="132.9" y="25.5" width="4.0" height="48.5" fill="#bebbc0"/><rect x="133.9" y="79.0" width="2" height="1.800" fill="#c6c3c8"/><rect x="141.2" y="22.0" width="4.0" height="52.0" fill="#bebbc0"/><rect x="142.2" y="79.0" width="2" height="1.800" fill="#c6c3c8"/><text x="80" y="90.500" text-anchor="middle" font-size="4.600" fill="#7d7a7f" font-family="'Noto Sans CJK JP',sans-serif">■系列1 ■系列2</text></g></svg><svg class="a" style="left:1193px;top:143px" width="160" height="96" viewBox="0 0 160 96"><rect width="160" height="96" fill="#969496"/><g style="filter:blur(.85px)"><text x="82" y="10.5" text-anchor="middle" font-size="6.8" font-weight="bold" fill="#fff" font-family="'Noto Sans CJK JP',sans-serif">グラフ タイトル</text><text x="80" y="21" text-anchor="middle" font-size="4.600" fill="#fff" font-family="'Noto Sans CJK JP',sans-serif">■系列1 ■系列2</text><rect x="15.0" y="74.9" width="3.500" height="3.1" fill="#aeacae" opacity=".8"/><rect x="11.0" y="73.4" width="10" height="2.600" fill="#e8e6e8" opacity=".9"/><rect x="13.5" y="80" width="5" height="2.400" fill="#d2d0d2" opacity=".8"/><rect x="15.0" y="89.500" width="2" height="1.800" fill="#bcbabc" opacity=".8"/><rect x="24.0" y="71.9" width="3.500" height="6.1" fill="#aeacae" opacity=".8"/><rect x="20.0" y="70.4" width="10" height="2.600" fill="#e8e6e8" opacity=".9"/><rect x="22.5" y="80" width="5" height="2.400" fill="#d2d0d2" opacity=".8"/><rect x="24.0" y="89.500" width="2" height="1.800" fill="#bcbabc" opacity=".8"/><rect x="33.0" y="68.8" width="3.500" height="9.2" fill="#aeacae" opacity=".8"/><rect x="29.0" y="67.3" width="10" height="2.600" fill="#e8e6e8" opacity=".9"/><rect x="31.5" y="80" width="5" height="2.400" fill="#d2d0d2" opacity=".8"/><rect x="33.0" y="89.500" width="2" height="1.800" fill="#bcbabc" opacity=".8"/><rect x="42.0" y="65.7" width="3.500" height="12.3" fill="#aeacae" opacity=".8"/><rect x="38.0" y="64.2" width="10" height="2.600" fill="#e8e6e8" opacity=".9"/><rect x="40.5" y="80" width="5" height="2.400" fill="#d2d0d2" opacity=".8"/><rect x="42.0" y="89.500" width="2" height="1.800" fill="#bcbabc" opacity=".8"/><rect x="51.0" y="62.7" width="3.500" height="15.3" fill="#aeacae" opacity=".8"/><rect x="47.0" y="61.2" width="10" height="2.600" fill="#e8e6e8" opacity=".9"/><rect x="49.5" y="80" width="5" height="2.400" fill="#d2d0d2" opacity=".8"/><rect x="51.0" y="89.500" width="2" height="1.800" fill="#bcbabc" opacity=".8"/><rect x="60.0" y="59.6" width="3.500" height="18.4" fill="#aeacae" opacity=".8"/><rect x="56.0" y="58.1" width="10" height="2.600" fill="#e8e6e8" opacity=".9"/><rect x="58.5" y="80" width="5" height="2.400" fill="#d2d0d2" opacity=".8"/><rect x="60.0" y="89.500" width="2" height="1.800" fill="#bcbabc" opacity=".8"/><rect x="69.0" y="56.5" width="3.500" height="21.5" fill="#aeacae" opacity=".8"/><rect x="65.0" y="55.0" width="10" height="2.600" fill="#e8e6e8" opacity=".9"/><rect x="67.5" y="80" width="5" height="2.400" fill="#d2d0d2" opacity=".8"/><rect x="69.0" y="89.500" width="2" height="1.800" fill="#bcbabc" opacity=".8"/><rect x="78.0" y="53.5" width="3.500" height="24.5" fill="#aeacae" opacity=".8"/><rect x="74.0" y="52.0" width="10" height="2.600" fill="#e8e6e8" opacity=".9"/><rect x="76.5" y="80" width="5" height="2.400" fill="#d2d0d2" opacity=".8"/><rect x="78.0" y="89.500" width="2" height="1.800" fill="#bcbabc" opacity=".8"/><rect x="87.0" y="50.4" width="3.500" height="27.6" fill="#aeacae" opacity=".8"/><rect x="83.0" y="48.9" width="10" height="2.600" fill="#e8e6e8" opacity=".9"/><rect x="85.5" y="80" width="5" height="2.400" fill="#d2d0d2" opacity=".8"/><rect x="87.0" y="89.500" width="2" height="1.800" fill="#bcbabc" opacity=".8"/><rect x="96.0" y="47.3" width="3.500" height="30.7" fill="#aeacae" opacity=".8"/><rect x="92.0" y="45.8" width="10" height="2.600" fill="#e8e6e8" opacity=".9"/><rect x="94.5" y="80" width="5" height="2.400" fill="#d2d0d2" opacity=".8"/><rect x="96.0" y="89.500" width="2" height="1.800" fill="#bcbabc" opacity=".8"/><rect x="105.0" y="44.3" width="3.500" height="33.7" fill="#aeacae" opacity=".8"/><rect x="101.0" y="42.8" width="10" height="2.600" fill="#e8e6e8" opacity=".9"/><rect x="103.5" y="80" width="5" height="2.400" fill="#d2d0d2" opacity=".8"/><rect x="105.0" y="89.500" width="2" height="1.800" fill="#bcbabc" opacity=".8"/><rect x="114.0" y="41.2" width="3.500" height="36.8" fill="#aeacae" opacity=".8"/><rect x="110.0" y="39.7" width="10" height="2.600" fill="#e8e6e8" opacity=".9"/><rect x="112.5" y="80" width="5" height="2.400" fill="#d2d0d2" opacity=".8"/><rect x="114.0" y="89.500" width="2" height="1.800" fill="#bcbabc" opacity=".8"/><rect x="123.0" y="38.1" width="3.500" height="39.9" fill="#aeacae" opacity=".8"/><rect x="119.0" y="36.6" width="10" height="2.600" fill="#e8e6e8" opacity=".9"/><rect x="121.5" y="80" width="5" height="2.400" fill="#d2d0d2" opacity=".8"/><rect x="123.0" y="89.500" width="2" height="1.800" fill="#bcbabc" opacity=".8"/><rect x="132.0" y="35.1" width="3.500" height="42.9" fill="#aeacae" opacity=".8"/><rect x="128.0" y="33.6" width="10" height="2.600" fill="#e8e6e8" opacity=".9"/><rect x="130.5" y="80" width="5" height="2.400" fill="#d2d0d2" opacity=".8"/><rect x="132.0" y="89.500" width="2" height="1.800" fill="#bcbabc" opacity=".8"/><rect x="141.0" y="32.0" width="3.500" height="46.0" fill="#aeacae" opacity=".8"/><rect x="137.0" y="30.5" width="10" height="2.600" fill="#e8e6e8" opacity=".9"/><rect x="139.5" y="80" width="5" height="2.400" fill="#d2d0d2" opacity=".8"/><rect x="141.0" y="89.500" width="2" height="1.800" fill="#bcbabc" opacity=".8"/></g></svg><svg class="a" style="left:1369px;top:143px" width="160" height="96" viewBox="0 0 160 96"><rect width="160" height="96" fill="#f4f1f6"/><g style="filter:blur(.85px)"><text x="80" y="9.5" text-anchor="middle" font-size="6.0" fill="#7d7a7f" font-family="'Noto Sans CJK JP',sans-serif">グラフ タイトル</text><rect x="6" y="19.0" width="12" height="2.200" fill="#bcb9be" opacity=".8"/><rect x="22" y="20.0" width="132" height=".700" fill="#e2dfe4"/><rect x="6" y="25.8" width="12" height="2.200" fill="#bcb9be" opacity=".8"/><rect x="22" y="26.8" width="132" height=".700" fill="#e2dfe4"/><rect x="6" y="32.5" width="12" height="2.200" fill="#bcb9be" opacity=".8"/><rect x="22" y="33.5" width="132" height=".700" fill="#e2dfe4"/><rect x="6" y="39.2" width="12" height="2.200" fill="#bcb9be" opacity=".8"/><rect x="22" y="40.2" width="132" height=".700" fill="#e2dfe4"/><rect x="6" y="46.0" width="12" height="2.200" fill="#bcb9be" opacity=".8"/><rect x="22" y="47.0" width="132" height=".700" fill="#e2dfe4"/><rect x="6" y="52.8" width="12" height="2.200" fill="#bcb9be" opacity=".8"/><rect x="22" y="53.8" width="132" height=".700" fill="#e2dfe4"/><rect x="6" y="59.5" width="12" height="2.200" fill="#bcb9be" opacity=".8"/><rect x="22" y="60.5" width="132" height=".700" fill="#e2dfe4"/><rect x="6" y="66.2" width="12" height="2.200" fill="#bcb9be" opacity=".8"/><rect x="22" y="67.2" width="132" height=".700" fill="#e2dfe4"/><rect x="15" y="73.0" width="2.500" height="2.200" fill="#bcb9be"/><rect x="22" y="74.0" width="132" height=".700" fill="#d6d3d8"/><rect x="25.0" y="70.5" width="3.4" height="3.5" fill="#bcb9be"/><rect x="26.0" y="79.0" width="2" height="1.800" fill="#c6c3c8"/><rect x="33.3" y="67.1" width="3.4" height="6.9" fill="#bcb9be"/><rect x="34.3" y="79.0" width="2" height="1.800" fill="#c6c3c8"/><rect x="41.6" y="63.6" width="3.4" height="10.4" fill="#bcb9be"/><rect x="42.6" y="79.0" width="2" height="1.800" fill="#c6c3c8"/><rect x="49.9" y="60.1" width="3.4" height="13.9" fill="#bcb9be"/><rect x="50.9" y="79.0" width="2" height="1.800" fill="#c6c3c8"/><rect x="58.2" y="56.7" width="3.4" height="17.3" fill="#bcb9be"/><rect x="59.2" y="79.0" width="2" height="1.800" fill="#c6c3c8"/><rect x="66.5" y="53.2" width="3.4" height="20.8" fill="#bcb9be"/><rect x="67.5" y="79.0" width="2" height="1.800" fill="#c6c3c8"/><rect x="74.8" y="49.7" width="3.4" height="24.3" fill="#bcb9be"/><rect x="75.8" y="79.0" width="2" height="1.800" fill="#c6c3c8"/><rect x="83.1" y="46.3" width="3.4" height="27.7" fill="#bcb9be"/><rect x="84.1" y="79.0" width="2" height="1.800" fill="#c6c3c8"/><rect x="91.4" y="42.8" width="3.4" height="31.2" fill="#bcb9be"/><rect x="92.4" y="79.0" width="2" height="1.800" fill="#c6c3c8"/><rect x="99.7" y="39.3" width="3.4" height="34.7" fill="#bcb9be"/><rect x="100.7" y="79.0" width="2" height="1.800" fill="#c6c3c8"/><rect x="108.0" y="35.9" width="3.4" height="38.1" fill="#bcb9be"/><rect x="109.0" y="79.0" width="2" height="1.800" fill="#c6c3c8"/><rect x="116.3" y="32.4" width="3.4" height="41.6" fill="#bcb9be"/><rect x="117.3" y="79.0" width="2" height="1.800" fill="#c6c3c8"/><rect x="124.6" y="28.9" width="3.4" height="45.1" fill="#bcb9be"/><rect x="125.6" y="79.0" width="2" height="1.800" fill="#c6c3c8"/><rect x="132.9" y="25.5" width="3.4" height="48.5" fill="#bcb9be"/><rect x="133.9" y="79.0" width="2" height="1.800" fill="#c6c3c8"/><rect x="141.2" y="22.0" width="3.4" height="52.0" fill="#bcb9be"/><rect x="142.2" y="79.0" width="2" height="1.800" fill="#c6c3c8"/><text x="80" y="90.500" text-anchor="middle" font-size="4.600" fill="#7d7a7f" font-family="'Noto Sans CJK JP',sans-serif">■系列1 ■系列2</text></g></svg><svg class="a" style="left:1545px;top:143px" width="160" height="96" viewBox="0 0 160 96"><rect width="160" height="96" fill="#f4f1f6"/><g style="filter:blur(.85px)"><text x="80" y="9.5" text-anchor="middle" font-size="6.8" font-weight="bold" fill="#7d7a7f" font-family="'Noto Sans CJK JP',sans-serif">グラフ タイトル</text><rect x="6" y="19.0" width="12" height="2.200" fill="#bcb9be" opacity=".8"/><rect x="22" y="20.0" width="132" height=".700" fill="#e2dfe4"/><rect x="6" y="25.8" width="12" height="2.200" fill="#bcb9be" opacity=".8"/><rect x="22" y="26.8" width="132" height=".700" fill="#e2dfe4"/><rect x="6" y="32.5" width="12" height="2.200" fill="#bcb9be" opacity=".8"/><rect x="22" y="33.5" width="132" height=".700" fill="#e2dfe4"/><rect x="6" y="39.2" width="12" height="2.200" fill="#bcb9be" opacity=".8"/><rect x="22" y="40.2" width="132" height=".700" fill="#e2dfe4"/><rect x="6" y="46.0" width="12" height="2.200" fill="#bcb9be" opacity=".8"/><rect x="22" y="47.0" width="132" height=".700" fill="#e2dfe4"/><rect x="6" y="52.8" width="12" height="2.200" fill="#bcb9be" opacity=".8"/><rect x="22" y="53.8" width="132" height=".700" fill="#e2dfe4"/><rect x="6" y="59.5" width="12" height="2.200" fill="#bcb9be" opacity=".8"/><rect x="22" y="60.5" width="132" height=".700" fill="#e2dfe4"/><rect x="6" y="66.2" width="12" height="2.200" fill="#bcb9be" opacity=".8"/><rect x="22" y="67.2" width="132" height=".700" fill="#e2dfe4"/><rect x="15" y="73.0" width="2.500" height="2.200" fill="#bcb9be"/><rect x="22" y="74.0" width="132" height=".700" fill="#d6d3d8"/><rect x="25.0" y="70.5" width="4.0" height="3.5" fill="#b8b5ba"/><rect x="25.4" y="70.5" width="1.600" height="3.5" fill="#e8e5ea" opacity=".7"/><rect x="26.0" y="79.0" width="2" height="1.800" fill="#c6c3c8"/><rect x="33.3" y="67.1" width="4.0" height="6.9" fill="#b8b5ba"/><rect x="33.7" y="67.1" width="1.600" height="6.9" fill="#e8e5ea" opacity=".7"/><rect x="34.3" y="79.0" width="2" height="1.800" fill="#c6c3c8"/><rect x="41.6" y="63.6" width="4.0" height="10.4" fill="#b8b5ba"/><rect x="42.0" y="63.6" width="1.600" height="10.4" fill="#e8e5ea" opacity=".7"/><rect x="42.6" y="79.0" width="2" height="1.800" fill="#c6c3c8"/><rect x="49.9" y="60.1" width="4.0" height="13.9" fill="#b8b5ba"/><rect x="50.3" y="60.1" width="1.600" height="13.9" fill="#e8e5ea" opacity=".7"/><rect x="50.9" y="79.0" width="2" height="1.800" fill="#c6c3c8"/><rect x="58.2" y="56.7" width="4.0" height="17.3" fill="#b8b5ba"/><rect x="58.6" y="56.7" width="1.600" height="17.3" fill="#e8e5ea" opacity=".7"/><rect x="59.2" y="79.0" width="2" height="1.800" fill="#c6c3c8"/><rect x="66.5" y="53.2" width="4.0" height="20.8" fill="#b8b5ba"/><rect x="66.9" y="53.2" width="1.600" height="20.8" fill="#e8e5ea" opacity=".7"/><rect x="67.5" y="79.0" width="2" height="1.800" fill="#c6c3c8"/><rect x="74.8" y="49.7" width="4.0" height="24.3" fill="#b8b5ba"/><rect x="75.2" y="49.7" width="1.600" height="24.3" fill="#e8e5ea" opacity=".7"/><rect x="75.8" y="79.0" width="2" height="1.800" fill="#c6c3c8"/><rect x="83.1" y="46.3" width="4.0" height="27.7" fill="#b8b5ba"/><rect x="83.5" y="46.3" width="1.600" height="27.7" fill="#e8e5ea" opacity=".7"/><rect x="84.1" y="79.0" width="2" height="1.800" fill="#c6c3c8"/><rect x="91.4" y="42.8" width="4.0" height="31.2" fill="#b8b5ba"/><rect x="91.8" y="42.8" width="1.600" height="31.2" fill="#e8e5ea" opacity=".7"/><rect x="92.4" y="79.0" width="2" height="1.800" fill="#c6c3c8"/><rect x="99.7" y="39.3" width="4.0" height="34.7" fill="#b8b5ba"/><rect x="100.1" y="39.3" width="1.600" height="34.7" fill="#e8e5ea" opacity=".7"/><rect x="100.7" y="79.0" width="2" height="1.800" fill="#c6c3c8"/><rect x="108.0" y="35.9" width="4.0" height="38.1" fill="#b8b5ba"/><rect x="108.4" y="35.9" width="1.600" height="38.1" fill="#e8e5ea" opacity=".7"/><rect x="109.0" y="79.0" width="2" height="1.800" fill="#c6c3c8"/><rect x="116.3" y="32.4" width="4.0" height="41.6" fill="#b8b5ba"/><rect x="116.7" y="32.4" width="1.600" height="41.6" fill="#e8e5ea" opacity=".7"/><rect x="117.3" y="79.0" width="2" height="1.800" fill="#c6c3c8"/><rect x="124.6" y="28.9" width="4.0" height="45.1" fill="#b8b5ba"/><rect x="125.0" y="28.9" width="1.600" height="45.1" fill="#e8e5ea" opacity=".7"/><rect x="125.6" y="79.0" width="2" height="1.800" fill="#c6c3c8"/><rect x="132.9" y="25.5" width="4.0" height="48.5" fill="#b8b5ba"/><rect x="133.3" y="25.5" width="1.600" height="48.5" fill="#e8e5ea" opacity=".7"/><rect x="133.9" y="79.0" width="2" height="1.800" fill="#c6c3c8"/><rect x="141.2" y="22.0" width="4.0" height="52.0" fill="#b8b5ba"/><rect x="141.6" y="22.0" width="1.600" height="52.0" fill="#e8e5ea" opacity=".7"/><rect x="142.2" y="79.0" width="2" height="1.800" fill="#c6c3c8"/><text x="80" y="90.500" text-anchor="middle" font-size="4.600" fill="#7d7a7f" font-family="'Noto Sans CJK JP',sans-serif">■系列1 ■系列2</text></g></svg><div class="sep" style="left:1751px"></div><div class="sep" style="left:1929px"></div><div class="sep" style="left:2062px"></div><div class="sep" style="left:2147px"></div><svg class="a" style="left:1769px;top:138px" width="60" height="52" viewBox="0 0 60 52"><rect x=".5" y=".5" width="57" height="50" fill="#fff" stroke="#9a9a9a"/><rect x="0" y="0" width="58" height="10" fill="#808080"/><path d="M15.500 10V50M29.500 10V50M43.500 10V50M1 23.500H57M1 37.500H57" stroke="#c8c8c8"/><path d="M33 20.500H43.500V40.500H19M19 30.500H43.500M29.500 30.500V40.500" fill="none" stroke="#e58530" stroke-width="1.400"/><path d="M15 38C15 27 22 19 34 18.300" fill="none" stroke="#4179b9" stroke-width="5.200"/><path d="M27 11.200L36.500 18.300L27 25" fill="none" stroke="#4179b9" stroke-width="4.600"/><path d="M7.600 31.800L15 40.500L23 33" fill="none" stroke="#4179b9" stroke-width="4.600"/></svg><div class="rl" style="left:1679.0px;top:196.5px;width:240px;">行/列<span class="k" style="width:22.1px;transform:scaleX(0.920)">の</span></div><div class="rl" style="left:1679.0px;top:227.0px;width:240px;">切<span class="k" style="width:17.0px;transform:scaleX(0.708)">り</span>替<span class="k" style="width:17.0px;transform:scaleX(0.708)">え</span></div><svg class="a" style="left:1856px;top:138px" width="62" height="60" viewBox="0 0 62 60"><rect x=".5" y=".5" width="54" height="50" fill="#fff" stroke="#9a9a9a"/><rect x="0" y="0" width="55" height="9" fill="#808080"/><path d="M14.500 9V50M28.500 9V50M41.500 9V50M1 22.500H54M1 35.500H54" stroke="#c8c8c8"/><rect x="13.500" y="19.500" width="28" height="20" fill="none" stroke="#e58530" stroke-width="1.400"/><rect x="28.500" y="27.500" width="31" height="29" fill="#fff" stroke="#9a9a9a"/><rect x="33.500" y="42.500" width="5" height="14" fill="#fff" stroke="#8c8c8c"/><rect x="38.500" y="35.500" width="5" height="21" fill="#d0d0d0" stroke="#8c8c8c"/><rect x="45.500" y="40.500" width="5" height="16" fill="#fff" stroke="#8c8c8c"/><rect x="50.500" y="45.500" width="5" height="11" fill="#d0d0d0" stroke="#8c8c8c"/></svg><div class="rl" style="left:1763.5px;top:196.5px;width:240px;"><span class="k" style="width:76.5px;transform:scaleX(0.797)">データの</span></div><div class="rl" style="left:1764.0px;top:227.0px;width:240px;">選択</div><svg class="a" style="left:1970px;top:134px" width="52" height="58" viewBox="0 0 52 58"><rect x="2" y="19" width="14" height="36" fill="#4a7ebb"/><rect x="18" y="3" width="14" height="52" fill="#eec57a"/><rect x="34" y="13" width="14" height="42" fill="#7f7f7f"/></svg><div class="rl" style="left:1875.0px;top:196.5px;width:240px;"><span class="k" style="width:71.0px;transform:scaleX(0.740)">グラフの</span>種類</div><div class="rl" style="left:1875.0px;top:227.0px;width:240px;"><span class="k" style="width:20.0px;transform:scaleX(0.833)">の</span>変更</div><svg class="a" style="left:2076px;top:137px" width="58" height="52" viewBox="0 0 58 52"><path d="M1.500 1.500H56.500V42.500H44L37 49.500H24.500V45L19.500 49.500H4.500Q1.500 49.500 1.500 46.500Z" fill="#fff" stroke="#a0a0a0"/><path d="M24.500 45L27 42.500H44" fill="none" stroke="#a0a0a0"/><rect x="12.500" y="16.500" width="7" height="18" fill="#fff" stroke="#9a9a9a"/><rect x="19.500" y="7.500" width="7" height="27" fill="#d4d4d4" stroke="#9a9a9a"/><rect x="31.500" y="15.500" width="7" height="19" fill="#fff" stroke="#9a9a9a"/><rect x="38.500" y="20.500" width="7" height="14" fill="#d4d4d4" stroke="#9a9a9a"/></svg><div class="rl" style="left:1984.0px;top:196.5px;width:240px;"><span class="k" style="width:71.0px;transform:scaleX(0.740)">グラフの</span></div><div class="rl" style="left:1984.5px;top:227.0px;width:240px;">移動</div><svg class="a" style="left:2264px;top:274px" width="20" height="14"><path d="M2 11L10 3L18 11" fill="none" stroke="#555" stroke-width="2.600"/></svg><div class="a" style="left:11px;top:318px;width:202px;height:53px;background:#fdfdfd;border:1px solid #c6c6c6"></div><div class="t g" style="left:18px;top:332.500px;font-size:29px;color:#333;word-spacing:-5px">グラフ 2</div><svg class="a" style="left:188px;top:339px" width="14" height="9"><path d="M0 0H14L7 8Z" fill="#6d6d6d"/></svg><div class="a" style="left:241px;top:334px;width:4px;height:4px;background:#bdbdbd;box-shadow:0 8px 0 #bdbdbd,0 16px 0 #bdbdbd"></div><div class="a" style="left:273px;top:318px;width:218px;height:53px;background:#fdfdfd;border:1px solid #c6c6c6"></div><svg class="a" style="left:298px;top:334px" width="24" height="22"><path d="M2 2L22 20M22 2L2 20" stroke="#c1c1c1" stroke-width="3"/></svg><svg class="a" style="left:369px;top:333px" width="28" height="24"><path d="M2 13L9 20L26 2" fill="none" stroke="#c6c6c6" stroke-width="4"/></svg><div class="t" style="left:440px;top:322px;font-family:'Liberation Serif',serif;font-style:italic;font-size:38px;color:#666;letter-spacing:-1.500px;-webkit-text-stroke:.3px #666">fx</div><div class="a" style="left:497px;top:318px;width:1790px;height:53px;background:#fdfdfd;border:1px solid #c6c6c6"></div><svg class="a" style="left:2259px;top:337px" width="20" height="14"><path d="M2 2L10 10L18 2" fill="none" stroke="#555" stroke-width="3"/></svg><div class="a" style="left:0;top:391px;width:2297px;height:1250px;overflow:hidden"><div class="a" style="left:55px;top:34px;width:2202px;height:1217px;background:#fff"></div><div class="hl" style="left:55px;top:68px;width:2202px"></div><div class="hl" style="left:55px;top:102px;width:2202px"></div><div class="hl" style="left:55px;top:136px;width:2202px"></div><div class="hl" style="left:55px;top:170px;width:2202px"></div><div class="hl" style="left:55px;top:204px;width:2202px"></div><div class="hl" style="left:55px;top:238px;width:2202px"></div><div class="hl" style="left:55px;top:272px;width:2202px"></div><div class="hl" style="left:55px;top:306px;width:2202px"></div><div class="hl" style="left:55px;top:340px;width:2202px"></div><div class="hl" style="left:55px;top:374px;width:2202px"></div><div class="hl" style="left:55px;top:408px;width:2202px"></div><div class="hl" style="left:55px;top:442px;width:2202px"></div><div class="hl" style="left:55px;top:476px;width:2202px"></div><div class="hl" style="left:55px;top:510px;width:2202px"></div><div class="hl" style="left:55px;top:544px;width:2202px"></div><div class="hl" style="left:55px;top:578px;width:2202px"></div><div class="hl" style="left:55px;top:612px;width:2202px"></div><div class="hl" style="left:55px;top:646px;width:2202px"></div><div class="hl" style="left:55px;top:680px;width:2202px"></div><div class="hl" style="left:55px;top:714px;width:2202px"></div><div class="hl" style="left:55px;top:748px;width:2202px"></div><div class="hl" style="left:55px;top:782px;width:2202px"></div><div class="hl" style="left:55px;top:816px;width:2202px"></div><div class="hl" style="left:55px;top:850px;width:2202px"></div><div class="hl" style="left:55px;top:884px;width:2202px"></div><div class="hl" style="left:55px;top:918px;width:2202px"></div><div class="hl" style="left:55px;top:952px;width:2202px"></div><div class="hl" style="left:55px;top:986px;width:2202px"></div><div class="hl" style="left:55px;top:1020px;width:2202px"></div><div class="hl" style="left:55px;top:1054px;width:2202px"></div><div class="hl" style="left:55px;top:1088px;width:2202px"></div><div class="hl" style="left:55px;top:1122px;width:2202px"></div><div class="hl" style="left:55px;top:1156px;width:2202px"></div><div class="hl" style="left:55px;top:1190px;width:2202px"></div><div class="hl" style="left:55px;top:1224px;width:2202px"></div><div class="hl" style="left:55px;top:1258px;width:2202px"></div><div class="vl" style="left:206px;top:34px;height:1217px"></div><div class="vl" style="left:336px;top:34px;height:1217px"></div><div class="vl" style="left:436px;top:34px;height:1217px"></div><div class="vl" style="left:508px;top:34px;height:1217px"></div><div class="vl" style="left:750px;top:34px;height:1217px"></div><div class="vl" style="left:847px;top:34px;height:1217px"></div><div class="vl" style="left:959px;top:34px;height:1217px"></div><div class="vl" style="left:1121px;top:34px;height:1217px"></div><div class="vl" style="left:1253px;top:34px;height:1217px"></div><div class="vl" style="left:1443px;top:34px;height:1217px"></div><div class="vl" style="left:1605px;top:34px;height:1217px"></div><div class="vl" style="left:1765px;top:34px;height:1217px"></div><div class="vl" style="left:1895px;top:34px;height:1217px"></div><div class="vl" style="left:1967px;top:34px;height:1217px"></div><div class="vl" style="left:2039px;top:34px;height:1217px"></div><div class="vl" style="left:2111px;top:34px;height:1217px"></div><div class="vl" style="left:2183px;top:34px;height:1217px"></div><div class="vl" style="left:2256px;top:34px;height:1217px"></div><div class="a" style="left:1606px;top:69px;width:289px;height:509px;background:rgba(68,114,196,.11)"></div><div class="a" style="left:1px;top:0;width:2257px;height:33px;background:#e6e6e6"></div><div class="ch" style="left:55px;width:151px">A</div><div class="ch" style="left:207px;width:129px">B</div><div class="ch" style="left:337px;width:99px">C</div><div class="ch" style="left:437px;width:71px">D</div><div class="ch" style="left:509px;width:241px">E</div><div class="ch" style="left:751px;width:96px">F</div><div class="ch" style="left:848px;width:111px">G</div><div class="ch" style="left:960px;width:161px">H</div><div class="ch" style="left:1122px;width:131px">I</div><div class="ch" style="left:1254px;width:189px">J</div><div class="ch" style="left:1444px;width:161px">K</div><div class="ch" style="left:1606px;width:159px">L</div><div class="ch" style="left:1766px;width:129px">M</div><div class="ch" style="left:1896px;width:71px">N</div><div class="ch" style="left:1968px;width:71px">O</div><div class="ch" style="left:2040px;width:71px">P</div><div class="ch" style="left:2112px;width:71px">Q</div><div class="ch" style="left:2184px;width:72px">R</div><div class="a" style="left:54px;top:1px;width:1px;height:33px;background:#b9b9b9"></div><div class="a" style="left:206px;top:1px;width:1px;height:33px;background:#b9b9b9"></div><div class="a" style="left:336px;top:1px;width:1px;height:33px;background:#b9b9b9"></div><div class="a" style="left:436px;top:1px;width:1px;height:33px;background:#b9b9b9"></div><div class="a" style="left:508px;top:1px;width:1px;height:33px;background:#b9b9b9"></div><div class="a" style="left:750px;top:1px;width:1px;height:33px;background:#b9b9b9"></div><div class="a" style="left:847px;top:1px;width:1px;height:33px;background:#b9b9b9"></div><div class="a" style="left:959px;top:1px;width:1px;height:33px;background:#b9b9b9"></div><div class="a" style="left:1121px;top:1px;width:1px;height:33px;background:#b9b9b9"></div><div class="a" style="left:1253px;top:1px;width:1px;height:33px;background:#b9b9b9"></div><div class="a" style="left:1443px;top:1px;width:1px;height:33px;background:#b9b9b9"></div><div class="a" style="left:1605px;top:1px;width:1px;height:33px;background:#b9b9b9"></div><div class="a" style="left:1765px;top:1px;width:1px;height:33px;background:#b9b9b9"></div><div class="a" style="left:1895px;top:1px;width:1px;height:33px;background:#b9b9b9"></div><div class="a" style="left:1967px;top:1px;width:1px;height:33px;background:#b9b9b9"></div><div class="a" style="left:2039px;top:1px;width:1px;height:33px;background:#b9b9b9"></div><div class="a" style="left:2111px;top:1px;width:1px;height:33px;background:#b9b9b9"></div><div class="a" style="left:2183px;top:1px;width:1px;height:33px;background:#b9b9b9"></div><div class="a" style="left:2256px;top:1px;width:1px;height:33px;background:#b9b9b9"></div><div class="a" style="left:1px;top:33px;width:2256px;height:1px;background:#a0a0a0"></div><svg class="a" style="left:24px;top:3px" width="28" height="28"><path d="M27 1.800V26.700H1.300Z" fill="#b4b4b4"/></svg><div class="a" style="left:1px;top:34px;width:53px;height:1217px;background:#e6e6e6"></div><div class="a" style="left:54px;top:34px;width:1px;height:1217px;background:#a0a0a0"></div><div class="rh" style="top:34.0px">1</div><div class="a" style="left:1px;top:68px;width:53px;height:1px;background:#b4b4b4"></div><div class="rh" style="top:69.2px">2</div><div class="a" style="left:1px;top:102px;width:53px;height:1px;background:#b4b4b4"></div><div class="rh" style="top:103.2px">3</div><div class="a" style="left:1px;top:136px;width:53px;height:1px;background:#b4b4b4"></div><div class="rh" style="top:137.2px">4</div><div class="a" style="left:1px;top:170px;width:53px;height:1px;background:#b4b4b4"></div><div class="rh" style="top:171.2px">5</div><div class="a" style="left:1px;top:204px;width:53px;height:1px;background:#b4b4b4"></div><div class="rh" style="top:205.2px">6</div><div class="a" style="left:1px;top:238px;width:53px;height:1px;background:#b4b4b4"></div><div class="rh" style="top:239.2px">7</div><div class="a" style="left:1px;top:272px;width:53px;height:1px;background:#b4b4b4"></div><div class="rh" style="top:273.2px">8</div><div class="a" style="left:1px;top:306px;width:53px;height:1px;background:#b4b4b4"></div><div class="rh" style="top:307.2px">9</div><div class="a" style="left:1px;top:340px;width:53px;height:1px;background:#b4b4b4"></div><div class="rh" style="top:341.2px">10</div><div class="a" style="left:1px;top:374px;width:53px;height:1px;background:#b4b4b4"></div><div class="rh" style="top:375.2px">11</div><div class="a" style="left:1px;top:408px;width:53px;height:1px;background:#b4b4b4"></div><div class="rh" style="top:409.2px">12</div><div class="a" style="left:1px;top:442px;width:53px;height:1px;background:#b4b4b4"></div><div class="rh" style="top:443.2px">13</div><div class="a" style="left:1px;top:476px;width:53px;height:1px;background:#b4b4b4"></div><div class="rh" style="top:477.2px">14</div><div class="a" style="left:1px;top:510px;width:53px;height:1px;background:#b4b4b4"></div><div class="rh" style="top:511.2px">15</div><div class="a" style="left:1px;top:544px;width:53px;height:1px;background:#b4b4b4"></div><div class="rh" style="top:545.2px">16</div><div class="a" style="left:1px;top:578px;width:53px;height:1px;background:#b4b4b4"></div><div class="rh" style="top:579.2px">17</div><div class="a" style="left:1px;top:612px;width:53px;height:1px;background:#b4b4b4"></div><div class="rh" style="top:613.2px">18</div><div class="a" style="left:1px;top:646px;width:53px;height:1px;background:#b4b4b4"></div><div class="rh" style="top:647.2px">19</div><div class="a" style="left:1px;top:680px;width:53px;height:1px;background:#b4b4b4"></div><div class="rh" style="top:681.2px">20</div><div class="a" style="left:1px;top:714px;width:53px;height:1px;background:#b4b4b4"></div><div class="rh" style="top:715.2px">21</div><div class="a" style="left:1px;top:748px;width:53px;height:1px;background:#b4b4b4"></div><div class="rh" style="top:749.2px">22</div><div class="a" style="left:1px;top:782px;width:53px;height:1px;background:#b4b4b4"></div><div class="rh" style="top:783.2px">23</div><div class="a" style="left:1px;top:816px;width:53px;height:1px;background:#b4b4b4"></div><div class="rh" style="top:817.2px">24</div><div class="a" style="left:1px;top:850px;width:53px;height:1px;background:#b4b4b4"></div><div class="rh" style="top:851.2px">25</div><div class="a" style="left:1px;top:884px;width:53px;height:1px;background:#b4b4b4"></div><div class="rh" style="top:885.2px">26</div><div class="a" style="left:1px;top:918px;width:53px;height:1px;background:#b4b4b4"></div><div class="rh" style="top:919.2px">27</div><div class="a" style="left:1px;top:952px;width:53px;height:1px;background:#b4b4b4"></div><div class="rh" style="top:953.2px">28</div><div class="a" style="left:1px;top:986px;width:53px;height:1px;background:#b4b4b4"></div><div class="rh" style="top:987.2px">29</div><div class="a" style="left:1px;top:1020px;width:53px;height:1px;background:#b4b4b4"></div><div class="rh" style="top:1021.2px">30</div><div class="a" style="left:1px;top:1054px;width:53px;height:1px;background:#b4b4b4"></div><div class="rh" style="top:1055.2px">31</div><div class="a" style="left:1px;top:1088px;width:53px;height:1px;background:#b4b4b4"></div><div class="rh" style="top:1089.2px">32</div><div class="a" style="left:1px;top:1122px;width:53px;height:1px;background:#b4b4b4"></div><div class="rh" style="top:1123.2px">33</div><div class="a" style="left:1px;top:1156px;width:53px;height:1px;background:#b4b4b4"></div><div class="rh" style="top:1157.2px">34</div><div class="a" style="left:1px;top:1190px;width:53px;height:1px;background:#b4b4b4"></div><div class="rh" style="top:1191.2px">35</div><div class="a" style="left:1px;top:1224px;width:53px;height:1px;background:#b4b4b4"></div><div class="rh" style="top:1225.2px">36</div><div class="a" style="left:1px;top:1258px;width:53px;height:1px;background:#b4b4b4"></div><div class="c l" style="left:55px;top:34.0px;width:151px;">日付</div><div class="c l" style="left:207px;top:34.0px;width:129px;">顧客番号</div><div class="c l" style="left:337px;top:34.0px;width:99px;">担当者</div><div class="c l" style="left:437px;top:34.0px;width:71px;">品番</div><div class="c l" style="left:509px;top:34.0px;width:241px;">品名</div><div class="c m" style="left:751px;top:34.0px;width:96px;">単価</div><div class="c m" style="left:848px;top:34.0px;width:111px;">個数</div><div class="c m" style="left:960px;top:34.0px;width:161px;">金額</div><div class="c r n" style="left:55px;top:69.2px;width:151px;letter-spacing:.45px;padding-right:5px;">2013/10/1</div><div class="c r n" style="left:207px;top:69.2px;width:129px;padding-right:5px;">3001</div><div class="c l" style="left:337px;top:69.2px;width:99px;">小田中</div><div class="c r n" style="left:437px;top:69.2px;width:71px;padding-right:5px;">102</div><div class="c l" style="left:509px;top:69.2px;width:241px;overflow:visible;">名刺<span class="dg">100</span>枚<span class="k2">セット</span><span class="la">B</span></div><div class="c r n" style="left:751px;top:69.2px;width:96px;">6<span class="cm">,</span>800</div><div class="c r n" style="left:848px;top:69.2px;width:111px;">7</div><div class="c r n" style="left:960px;top:69.2px;width:161px;">47<span class="cm">,</span>600</div><div class="c r n" style="left:1606px;top:69.2px;width:159px;">10000</div><div class="c r n" style="left:1766px;top:69.2px;width:129px;">203</div><div class="c r n" style="left:55px;top:103.2px;width:151px;letter-spacing:.45px;padding-right:5px;">2013/10/1</div><div class="c r n" style="left:207px;top:103.2px;width:129px;padding-right:5px;">1002</div><div class="c l" style="left:337px;top:103.2px;width:99px;">小田中</div><div class="c r n" style="left:437px;top:103.2px;width:71px;padding-right:5px;">323</div><div class="c l" style="left:509px;top:103.2px;width:241px;overflow:visible;"><span class="kk">カラー</span>印刷<span class="la">A</span><span class="dg">3</span></div><div class="c r n" style="left:751px;top:103.2px;width:96px;">600</div><div class="c r n" style="left:848px;top:103.2px;width:111px;">7</div><div class="c r n" style="left:960px;top:103.2px;width:161px;">4<span class="cm">,</span>200</div><div class="c r n" style="left:1606px;top:103.2px;width:159px;">20000</div><div class="c r n" style="left:1766px;top:103.2px;width:129px;">89</div><div class="c r n" style="left:55px;top:137.2px;width:151px;letter-spacing:.45px;padding-right:5px;">2013/10/2</div><div class="c r n" style="left:207px;top:137.2px;width:129px;padding-right:5px;">1001</div><div class="c l" style="left:337px;top:137.2px;width:99px;">小田中</div><div class="c r n" style="left:437px;top:137.2px;width:71px;padding-right:5px;">453</div><div class="c l" style="left:509px;top:137.2px;width:241px;overflow:visible;">特製<span class="kk">スタンプ</span>角<span class="la">B</span></div><div class="c r n" style="left:751px;top:137.2px;width:96px;">3<span class="cm">,</span>200</div><div class="c r n" style="left:848px;top:137.2px;width:111px;">9</div><div class="c r n" style="left:960px;top:137.2px;width:161px;">28<span class="cm">,</span>800</div><div class="c r n" style="left:1606px;top:137.2px;width:159px;">30000</div><div class="c r n" style="left:1766px;top:137.2px;width:129px;">41</div><div class="c r n" style="left:55px;top:171.2px;width:151px;letter-spacing:.45px;padding-right:5px;">2013/10/2</div><div class="c r n" style="left:207px;top:171.2px;width:129px;padding-right:5px;">1003</div><div class="c l" style="left:337px;top:171.2px;width:99px;">小田中</div><div class="c r n" style="left:437px;top:171.2px;width:71px;padding-right:5px;">321</div><div class="c l" style="left:509px;top:171.2px;width:241px;overflow:visible;"><span class="kk">カラー</span>印刷<span class="la">B</span><span class="dg">5</span></div><div class="c r n" style="left:751px;top:171.2px;width:96px;">240</div><div class="c r n" style="left:848px;top:171.2px;width:111px;">2</div><div class="c r n" style="left:960px;top:171.2px;width:161px;">480</div><div class="c r n" style="left:1606px;top:171.2px;width:159px;">40000</div><div class="c r n" style="left:1766px;top:171.2px;width:129px;">19</div><div class="c r n" style="left:55px;top:205.2px;width:151px;letter-spacing:.45px;padding-right:5px;">2013/10/3</div><div class="c r n" style="left:207px;top:205.2px;width:129px;padding-right:5px;">2001</div><div class="c l" style="left:337px;top:205.2px;width:99px;">小田中</div><div class="c r n" style="left:437px;top:205.2px;width:71px;padding-right:5px;">104</div><div class="c l" style="left:509px;top:205.2px;width:241px;overflow:visible;">名刺<span class="dg">100</span>枚<span class="k2">セット</span><span class="la">D</span></div><div class="c r n" style="left:751px;top:205.2px;width:96px;">14<span class="cm">,</span>500</div><div class="c r n" style="left:848px;top:205.2px;width:111px;">3</div><div class="c r n" style="left:960px;top:205.2px;width:161px;">43<span class="cm">,</span>500</div><div class="c r n" style="left:1606px;top:205.2px;width:159px;">50000</div><div class="c r n" style="left:1766px;top:205.2px;width:129px;">22</div><div class="c r n" style="left:55px;top:239.2px;width:151px;letter-spacing:.45px;padding-right:5px;">2013/10/3</div><div class="c r n" style="left:207px;top:239.2px;width:129px;padding-right:5px;">2001</div><div class="c l" style="left:337px;top:239.2px;width:99px;">小田中</div><div class="c r n" style="left:437px;top:239.2px;width:71px;padding-right:5px;">104</div><div class="c l" style="left:509px;top:239.2px;width:241px;overflow:visible;">名刺<span class="dg">100</span>枚<span class="k2">セット</span><span class="la">D</span></div><div class="c r n" style="left:751px;top:239.2px;width:96px;">14<span class="cm">,</span>500</div><div class="c r n" style="left:848px;top:239.2px;width:111px;">2</div><div class="c r n" style="left:960px;top:239.2px;width:161px;">29<span class="cm">,</span>000</div><div class="c r n" style="left:1606px;top:239.2px;width:159px;">60000</div><div class="c r n" style="left:1766px;top:239.2px;width:129px;">8</div><div class="c r n" style="left:55px;top:273.2px;width:151px;letter-spacing:.45px;padding-right:5px;">2013/10/3</div><div class="c r n" style="left:207px;top:273.2px;width:129px;padding-right:5px;">3001</div><div class="c l" style="left:337px;top:273.2px;width:99px;">小田中</div><div class="c r n" style="left:437px;top:273.2px;width:71px;padding-right:5px;">104</div><div class="c l" style="left:509px;top:273.2px;width:241px;overflow:visible;">名刺<span class="dg">100</span>枚<span class="k2">セット</span><span class="la">D</span></div><div class="c r n" style="left:751px;top:273.2px;width:96px;">14<span class="cm">,</span>500</div><div class="c r n" style="left:848px;top:273.2px;width:111px;">8</div><div class="c r n" style="left:960px;top:273.2px;width:161px;">116<span class="cm">,</span>000</div><div class="c r n" style="left:1606px;top:273.2px;width:159px;">70000</div><div class="c r n" style="left:1766px;top:273.2px;width:129px;">16</div><div class="c r n" style="left:55px;top:307.2px;width:151px;letter-spacing:.45px;padding-right:5px;">2013/10/3</div><div class="c r n" style="left:207px;top:307.2px;width:129px;padding-right:5px;">2001</div><div class="c l" style="left:337px;top:307.2px;width:99px;">小田中</div><div class="c r n" style="left:437px;top:307.2px;width:71px;padding-right:5px;">102</div><div class="c l" style="left:509px;top:307.2px;width:241px;overflow:visible;">名刺<span class="dg">100</span>枚<span class="k2">セット</span><span class="la">B</span></div><div class="c r n" style="left:751px;top:307.2px;width:96px;">6<span class="cm">,</span>800</div><div class="c r n" style="left:848px;top:307.2px;width:111px;">9</div><div class="c r n" style="left:960px;top:307.2px;width:161px;">61<span class="cm">,</span>200</div><div class="c r n" style="left:1606px;top:307.2px;width:159px;">80000</div><div class="c r n" style="left:1766px;top:307.2px;width:129px;">13</div><div class="c r n" style="left:55px;top:341.2px;width:151px;letter-spacing:.45px;padding-right:5px;">2013/10/4</div><div class="c r n" style="left:207px;top:341.2px;width:129px;padding-right:5px;">3001</div><div class="c l" style="left:337px;top:341.2px;width:99px;">小田中</div><div class="c r n" style="left:437px;top:341.2px;width:71px;padding-right:5px;">451</div><div class="c l" style="left:509px;top:341.2px;width:241px;overflow:visible;">特製<span class="kk">スタンプ</span>円形</div><div class="c r n" style="left:751px;top:341.2px;width:96px;">2<span class="cm">,</span>100</div><div class="c r n" style="left:848px;top:341.2px;width:111px;">5</div><div class="c r n" style="left:960px;top:341.2px;width:161px;">10<span class="cm">,</span>500</div><div class="c r n" style="left:1606px;top:341.2px;width:159px;">90000</div><div class="c r n" style="left:1766px;top:341.2px;width:129px;">11</div><div class="c r n" style="left:55px;top:375.2px;width:151px;letter-spacing:.45px;padding-right:5px;">2013/10/4</div><div class="c r n" style="left:207px;top:375.2px;width:129px;padding-right:5px;">1002</div><div class="c l" style="left:337px;top:375.2px;width:99px;">小田中</div><div class="c r n" style="left:437px;top:375.2px;width:71px;padding-right:5px;">452</div><div class="c l" style="left:509px;top:375.2px;width:241px;overflow:visible;">特製<span class="kk">スタンプ</span>角<span class="la">A</span></div><div class="c r n" style="left:751px;top:375.2px;width:96px;">1<span class="cm">,</span>600</div><div class="c r n" style="left:848px;top:375.2px;width:111px;">6</div><div class="c r n" style="left:960px;top:375.2px;width:161px;">9<span class="cm">,</span>600</div><div class="c r n" style="left:1606px;top:375.2px;width:159px;">100000</div><div class="c r n" style="left:1766px;top:375.2px;width:129px;">1</div><div class="c r n" style="left:55px;top:409.2px;width:151px;letter-spacing:.45px;padding-right:5px;">2013/10/5</div><div class="c r n" style="left:207px;top:409.2px;width:129px;padding-right:5px;">1002</div><div class="c l" style="left:337px;top:409.2px;width:99px;">小田中</div><div class="c r n" style="left:437px;top:409.2px;width:71px;padding-right:5px;">322</div><div class="c l" style="left:509px;top:409.2px;width:241px;overflow:visible;"><span class="kk">カラー</span>印刷<span class="la">A</span><span class="dg">4</span></div><div class="c r n" style="left:751px;top:409.2px;width:96px;">400</div><div class="c r n" style="left:848px;top:409.2px;width:111px;">4</div><div class="c r n" style="left:960px;top:409.2px;width:161px;">1<span class="cm">,</span>600</div><div class="c r n" style="left:1606px;top:409.2px;width:159px;">110000</div><div class="c r n" style="left:1766px;top:409.2px;width:129px;">4</div><div class="c r n" style="left:55px;top:443.2px;width:151px;letter-spacing:.45px;padding-right:5px;">2013/10/5</div><div class="c r n" style="left:207px;top:443.2px;width:129px;padding-right:5px;">2001</div><div class="c l" style="left:337px;top:443.2px;width:99px;">小田中</div><div class="c r n" style="left:437px;top:443.2px;width:71px;padding-right:5px;">101</div><div class="c l" style="left:509px;top:443.2px;width:241px;overflow:visible;">名刺<span class="dg">100</span>枚<span class="k2">セット</span><span class="la">A</span></div><div class="c r n" style="left:751px;top:443.2px;width:96px;">7<span class="cm">,</span>800</div><div class="c r n" style="left:848px;top:443.2px;width:111px;">1</div><div class="c r n" style="left:960px;top:443.2px;width:161px;">7<span class="cm">,</span>800</div><div class="c r n" style="left:1606px;top:443.2px;width:159px;">120000</div><div class="c r n" style="left:1766px;top:443.2px;width:129px;">10</div><div class="c r n" style="left:55px;top:477.2px;width:151px;letter-spacing:.45px;padding-right:5px;">2013/10/5</div><div class="c r n" style="left:207px;top:477.2px;width:129px;padding-right:5px;">3001</div><div class="c l" style="left:337px;top:477.2px;width:99px;">小田中</div><div class="c r n" style="left:437px;top:477.2px;width:71px;padding-right:5px;">103</div><div class="c l" style="left:509px;top:477.2px;width:241px;overflow:visible;">名刺<span class="dg">100</span>枚<span class="k2">セット</span><span class="la">C</span></div><div class="c r n" style="left:751px;top:477.2px;width:96px;">12<span class="cm">,</span>500</div><div class="c r n" style="left:848px;top:477.2px;width:111px;">6</div><div class="c r n" style="left:960px;top:477.2px;width:161px;">75<span class="cm">,</span>000</div><div class="c r n" style="left:1606px;top:477.2px;width:159px;">130000</div><div class="c r n" style="left:1766px;top:477.2px;width:129px;">4</div><div class="c r n" style="left:55px;top:511.2px;width:151px;letter-spacing:.45px;padding-right:5px;">2013/10/5</div><div class="c r n" style="left:207px;top:511.2px;width:129px;padding-right:5px;">1003</div><div class="c l" style="left:337px;top:511.2px;width:99px;">小田中</div><div class="c r n" style="left:437px;top:511.2px;width:71px;padding-right:5px;">103</div><div class="c l" style="left:509px;top:511.2px;width:241px;overflow:visible;">名刺<span class="dg">100</span>枚<span class="k2">セット</span><span class="la">C</span></div><div class="c r n" style="left:751px;top:511.2px;width:96px;">12<span class="cm">,</span>500</div><div class="c r n" style="left:848px;top:511.2px;width:111px;">6</div><div class="c r n" style="left:960px;top:511.2px;width:161px;">75<span class="cm">,</span>000</div><div class="c r n" style="left:1606px;top:511.2px;width:159px;">140000</div><div class="c r n" style="left:1766px;top:511.2px;width:129px;">5</div><div class="c r n" style="left:55px;top:545.2px;width:151px;letter-spacing:.45px;padding-right:5px;">2013/10/6</div><div class="c r n" style="left:207px;top:545.2px;width:129px;padding-right:5px;">2001</div><div class="c l" style="left:337px;top:545.2px;width:99px;">小田中</div><div class="c r n" style="left:437px;top:545.2px;width:71px;padding-right:5px;">103</div><div class="c l" style="left:509px;top:545.2px;width:241px;overflow:visible;">名刺<span class="dg">100</span>枚<span class="k2">セット</span><span class="la">C</span></div><div class="c r n" style="left:751px;top:545.2px;width:96px;">12<span class="cm">,</span>500</div><div class="c r n" style="left:848px;top:545.2px;width:111px;">6</div><div class="c r n" style="left:960px;top:545.2px;width:161px;">75<span class="cm">,</span>000</div><div class="c r n" style="left:1606px;top:545.2px;width:159px;">150000</div><div class="c r n" style="left:1766px;top:545.2px;width:129px;">6</div><div class="c r n" style="left:55px;top:579.2px;width:151px;letter-spacing:.45px;padding-right:5px;">2013/10/7</div><div class="c r n" style="left:207px;top:579.2px;width:129px;padding-right:5px;">1001</div><div class="c l" style="left:337px;top:579.2px;width:99px;">小田中</div><div class="c r n" style="left:437px;top:579.2px;width:71px;padding-right:5px;">104</div><div class="c l" style="left:509px;top:579.2px;width:241px;overflow:visible;">名刺<span class="dg">100</span>枚<span class="k2">セット</span><span class="la">D</span></div><div class="c r n" style="left:751px;top:579.2px;width:96px;">14<span class="cm">,</span>500</div><div class="c r n" style="left:848px;top:579.2px;width:111px;">4</div><div class="c r n" style="left:960px;top:579.2px;width:161px;">58<span class="cm">,</span>000</div><div class="c r n" style="left:55px;top:613.2px;width:151px;letter-spacing:.45px;padding-right:5px;">2013/10/8</div><div class="c r n" style="left:207px;top:613.2px;width:129px;padding-right:5px;">1003</div><div class="c l" style="left:337px;top:613.2px;width:99px;">小田中</div><div class="c r n" style="left:437px;top:613.2px;width:71px;padding-right:5px;">104</div><div class="c l" style="left:509px;top:613.2px;width:241px;overflow:visible;">名刺<span class="dg">100</span>枚<span class="k2">セット</span><span class="la">D</span></div><div class="c r n" style="left:751px;top:613.2px;width:96px;">14<span class="cm">,</span>500</div><div class="c r n" style="left:848px;top:613.2px;width:111px;">2</div><div class="c r n" style="left:960px;top:613.2px;width:161px;">29<span class="cm">,</span>000</div><div class="c r n" style="left:55px;top:647.2px;width:151px;letter-spacing:.45px;padding-right:5px;">2013/10/8</div><div class="c r n" style="left:207px;top:647.2px;width:129px;padding-right:5px;">1003</div><div class="c l" style="left:337px;top:647.2px;width:99px;">小田中</div><div class="c r n" style="left:437px;top:647.2px;width:71px;padding-right:5px;">451</div><div class="c l" style="left:509px;top:647.2px;width:241px;overflow:visible;">特製<span class="kk">スタンプ</span>円形</div><div class="c r n" style="left:751px;top:647.2px;width:96px;">2<span class="cm">,</span>100</div><div class="c r n" style="left:848px;top:647.2px;width:111px;">5</div><div class="c r n" style="left:960px;top:647.2px;width:161px;">10<span class="cm">,</span>500</div><div class="c r n" style="left:55px;top:681.2px;width:151px;letter-spacing:.45px;padding-right:5px;">2013/10/8</div><div class="c r n" style="left:207px;top:681.2px;width:129px;padding-right:5px;">1001</div><div class="c l" style="left:337px;top:681.2px;width:99px;">小田中</div><div class="c r n" style="left:437px;top:681.2px;width:71px;padding-right:5px;">453</div><div class="c l" style="left:509px;top:681.2px;width:241px;overflow:visible;">特製<span class="kk">スタンプ</span>角<span class="la">B</span></div><div class="c r n" style="left:751px;top:681.2px;width:96px;">3<span class="cm">,</span>200</div><div class="c r n" style="left:848px;top:681.2px;width:111px;">7</div><div class="c r n" style="left:960px;top:681.2px;width:161px;">22<span class="cm">,</span>400</div><div class="c r n" style="left:55px;top:715.2px;width:151px;letter-spacing:.45px;padding-right:5px;">2013/10/9</div><div class="c r n" style="left:207px;top:715.2px;width:129px;padding-right:5px;">1001</div><div class="c l" style="left:337px;top:715.2px;width:99px;">小田中</div><div class="c r n" style="left:437px;top:715.2px;width:71px;padding-right:5px;">101</div><div class="c l" style="left:509px;top:715.2px;width:241px;overflow:visible;">名刺<span class="dg">100</span>枚<span class="k2">セット</span><span class="la">A</span></div><div class="c r n" style="left:751px;top:715.2px;width:96px;">7<span class="cm">,</span>800</div><div class="c r n" style="left:848px;top:715.2px;width:111px;">6</div><div class="c r n" style="left:960px;top:715.2px;width:161px;">46<span class="cm">,</span>800</div><div class="c r n" style="left:55px;top:749.2px;width:151px;letter-spacing:.45px;padding-right:5px;">2013/10/9</div><div class="c r n" style="left:207px;top:749.2px;width:129px;padding-right:5px;">1002</div><div class="c l" style="left:337px;top:749.2px;width:99px;">小田中</div><div class="c r n" style="left:437px;top:749.2px;width:71px;padding-right:5px;">322</div><div class="c l" style="left:509px;top:749.2px;width:241px;overflow:visible;"><span class="kk">カラー</span>印刷<span class="la">A</span><span class="dg">4</span></div><div class="c r n" style="left:751px;top:749.2px;width:96px;">400</div><div class="c r n" style="left:848px;top:749.2px;width:111px;">4</div><div class="c r n" style="left:960px;top:749.2px;width:161px;">1<span class="cm">,</span>600</div><div class="c r n" style="left:55px;top:783.2px;width:151px;letter-spacing:.45px;padding-right:5px;">2013/10/9</div><div class="c r n" style="left:207px;top:783.2px;width:129px;padding-right:5px;">1003</div><div class="c l" style="left:337px;top:783.2px;width:99px;">小田中</div><div class="c r n" style="left:437px;top:783.2px;width:71px;padding-right:5px;">104</div><div class="c l" style="left:509px;top:783.2px;width:241px;overflow:visible;">名刺<span class="dg">100</span>枚<span class="k2">セット</span><span class="la">D</span></div><div class="c r n" style="left:751px;top:783.2px;width:96px;">14<span class="cm">,</span>500</div><div class="c r n" style="left:848px;top:783.2px;width:111px;">1</div><div class="c r n" style="left:960px;top:783.2px;width:161px;">14<span class="cm">,</span>500</div><div class="c r n" style="left:55px;top:817.2px;width:151px;letter-spacing:.45px;padding-right:5px;">2013/10/9</div><div class="c r n" style="left:207px;top:817.2px;width:129px;padding-right:5px;">1001</div><div class="c l" style="left:337px;top:817.2px;width:99px;">小田中</div><div class="c r n" style="left:437px;top:817.2px;width:71px;padding-right:5px;">453</div><div class="c l" style="left:509px;top:817.2px;width:241px;overflow:visible;">特製<span class="kk">スタンプ</span>角<span class="la">B</span></div><div class="c r n" style="left:751px;top:817.2px;width:96px;">3<span class="cm">,</span>200</div><div class="c r n" style="left:848px;top:817.2px;width:111px;">1</div><div class="c r n" style="left:960px;top:817.2px;width:161px;">3<span class="cm">,</span>200</div><div class="c m" style="left:55px;top:851.2px;width:151px;"><span class="hs">#########</span></div><div class="c r n" style="left:207px;top:851.2px;width:129px;padding-right:5px;">2001</div><div class="c l" style="left:337px;top:851.2px;width:99px;">小田中</div><div class="c r n" style="left:437px;top:851.2px;width:71px;padding-right:5px;">105</div><div class="c l" style="left:509px;top:851.2px;width:241px;overflow:visible;"><span class="kk">チラシ</span><span class="dg">100</span>枚<span class="k2">セット</span><span class="la">A</span></div><div class="c r n" style="left:751px;top:851.2px;width:96px;">2<span class="cm">,</span>300</div><div class="c r n" style="left:848px;top:851.2px;width:111px;">7</div><div class="c r n" style="left:960px;top:851.2px;width:161px;">16<span class="cm">,</span>100</div><div class="c m" style="left:55px;top:885.2px;width:151px;"><span class="hs">#########</span></div><div class="c r n" style="left:207px;top:885.2px;width:129px;padding-right:5px;">1003</div><div class="c l" style="left:337px;top:885.2px;width:99px;">小田中</div><div class="c r n" style="left:437px;top:885.2px;width:71px;padding-right:5px;">104</div><div class="c l" style="left:509px;top:885.2px;width:241px;overflow:visible;">名刺<span class="dg">100</span>枚<span class="k2">セット</span><span class="la">D</span></div><div class="c r n" style="left:751px;top:885.2px;width:96px;">14<span class="cm">,</span>500</div><div class="c r n" style="left:848px;top:885.2px;width:111px;">6</div><div class="c r n" style="left:960px;top:885.2px;width:161px;">87<span class="cm">,</span>000</div><div class="c m" style="left:55px;top:919.2px;width:151px;"><span class="hs">#########</span></div><div class="c r n" style="left:207px;top:919.2px;width:129px;padding-right:5px;">3001</div><div class="c l" style="left:337px;top:919.2px;width:99px;">小田中</div><div class="c r n" style="left:437px;top:919.2px;width:71px;padding-right:5px;">452</div><div class="c l" style="left:509px;top:919.2px;width:241px;overflow:visible;">特製<span class="kk">スタンプ</span>角<span class="la">A</span></div><div class="c r n" style="left:751px;top:919.2px;width:96px;">1<span class="cm">,</span>600</div><div class="c r n" style="left:848px;top:919.2px;width:111px;">5</div><div class="c r n" style="left:960px;top:919.2px;width:161px;">8<span class="cm">,</span>000</div><div class="c m" style="left:55px;top:953.2px;width:151px;"><span class="hs">#########</span></div><div class="c r n" style="left:207px;top:953.2px;width:129px;padding-right:5px;">2001</div><div class="c l" style="left:337px;top:953.2px;width:99px;">小田中</div><div class="c r n" style="left:437px;top:953.2px;width:71px;padding-right:5px;">102</div><div class="c l" style="left:509px;top:953.2px;width:241px;overflow:visible;">名刺<span class="dg">100</span>枚<span class="k2">セット</span><span class="la">B</span></div><div class="c r n" style="left:751px;top:953.2px;width:96px;">6<span class="cm">,</span>800</div><div class="c r n" style="left:848px;top:953.2px;width:111px;">2</div><div class="c r n" style="left:960px;top:953.2px;width:161px;">13<span class="cm">,</span>600</div><div class="c m" style="left:55px;top:987.2px;width:151px;"><span class="hs">#########</span></div><div class="c r n" style="left:207px;top:987.2px;width:129px;padding-right:5px;">3001</div><div class="c l" style="left:337px;top:987.2px;width:99px;">小田中</div><div class="c r n" style="left:437px;top:987.2px;width:71px;padding-right:5px;">104</div><div class="c l" style="left:509px;top:987.2px;width:241px;overflow:visible;">名刺<span class="dg">100</span>枚<span class="k2">セット</span><span class="la">D</span></div><div class="c r n" style="left:751px;top:987.2px;width:96px;">14<span class="cm">,</span>500</div><div class="c r n" style="left:848px;top:987.2px;width:111px;">7</div><div class="c r n" style="left:960px;top:987.2px;width:161px;">101<span class="cm">,</span>500</div><div class="c m" style="left:55px;top:1021.2px;width:151px;"><span class="hs">#########</span></div><div class="c r n" style="left:207px;top:1021.2px;width:129px;padding-right:5px;">1002</div><div class="c l" style="left:337px;top:1021.2px;width:99px;">小田中</div><div class="c r n" style="left:437px;top:1021.2px;width:71px;padding-right:5px;">452</div><div class="c l" style="left:509px;top:1021.2px;width:241px;overflow:visible;">特製<span class="kk">スタンプ</span>角<span class="la">A</span></div><div class="c r n" style="left:751px;top:1021.2px;width:96px;">1<span class="cm">,</span>600</div><div class="c r n" style="left:848px;top:1021.2px;width:111px;">9</div><div class="c r n" style="left:960px;top:1021.2px;width:161px;">14<span class="cm">,</span>400</div><div class="c m" style="left:55px;top:1055.2px;width:151px;"><span class="hs">#########</span></div><div class="c r n" style="left:207px;top:1055.2px;width:129px;padding-right:5px;">1002</div><div class="c l" style="left:337px;top:1055.2px;width:99px;">小田中</div><div class="c r n" style="left:437px;top:1055.2px;width:71px;padding-right:5px;">453</div><div class="c l" style="left:509px;top:1055.2px;width:241px;overflow:visible;">特製<span class="kk">スタンプ</span>角<span class="la">B</span></div><div class="c r n" style="left:751px;top:1055.2px;width:96px;">3<span class="cm">,</span>200</div><div class="c r n" style="left:848px;top:1055.2px;width:111px;">3</div><div class="c r n" style="left:960px;top:1055.2px;width:161px;">9<span class="cm">,</span>600</div><div class="c m" style="left:55px;top:1089.2px;width:151px;"><span class="hs">#########</span></div><div class="c r n" style="left:207px;top:1089.2px;width:129px;padding-right:5px;">1002</div><div class="c l" style="left:337px;top:1089.2px;width:99px;">小田中</div><div class="c r n" style="left:437px;top:1089.2px;width:71px;padding-right:5px;">452</div><div class="c l" style="left:509px;top:1089.2px;width:241px;overflow:visible;">特製<span class="kk">スタンプ</span>角<span class="la">A</span></div><div class="c r n" style="left:751px;top:1089.2px;width:96px;">1<span class="cm">,</span>600</div><div class="c r n" style="left:848px;top:1089.2px;width:111px;">6</div><div class="c r n" style="left:960px;top:1089.2px;width:161px;">9<span class="cm">,</span>600</div><div class="c m" style="left:55px;top:1123.2px;width:151px;"><span class="hs">#########</span></div><div class="c r n" style="left:207px;top:1123.2px;width:129px;padding-right:5px;">1003</div><div class="c l" style="left:337px;top:1123.2px;width:99px;">小田中</div><div class="c r n" style="left:437px;top:1123.2px;width:71px;padding-right:5px;">322</div><div class="c l" style="left:509px;top:1123.2px;width:241px;overflow:visible;"><span class="kk">カラー</span>印刷<span class="la">A</span><span class="dg">4</span></div><div class="c r n" style="left:751px;top:1123.2px;width:96px;">400</div><div class="c r n" style="left:848px;top:1123.2px;width:111px;">4</div><div class="c r n" style="left:960px;top:1123.2px;width:161px;">1<span class="cm">,</span>600</div><div class="c m" style="left:55px;top:1157.2px;width:151px;"><span class="hs">#########</span></div><div class="c r n" style="left:207px;top:1157.2px;width:129px;padding-right:5px;">1001</div><div class="c l" style="left:337px;top:1157.2px;width:99px;">小田中</div><div class="c r n" style="left:437px;top:1157.2px;width:71px;padding-right:5px;">452</div><div class="c l" style="left:509px;top:1157.2px;width:241px;overflow:visible;">特製<span class="kk">スタンプ</span>角<span class="la">A</span></div><div class="c r n" style="left:751px;top:1157.2px;width:96px;">1<span class="cm">,</span>600</div><div class="c r n" style="left:848px;top:1157.2px;width:111px;">5</div><div class="c r n" style="left:960px;top:1157.2px;width:161px;">8<span class="cm">,</span>000</div><div class="c m" style="left:55px;top:1191.2px;width:151px;"><span class="hs">#########</span></div><div class="c r n" style="left:207px;top:1191.2px;width:129px;padding-right:5px;">1003</div><div class="c l" style="left:337px;top:1191.2px;width:99px;">小田中</div><div class="c r n" style="left:437px;top:1191.2px;width:71px;padding-right:5px;">323</div><div class="c l" style="left:509px;top:1191.2px;width:241px;overflow:visible;"><span class="kk">カラー</span>印刷<span class="la">A</span><span class="dg">3</span></div><div class="c r n" style="left:751px;top:1191.2px;width:96px;">600</div><div class="c r n" style="left:848px;top:1191.2px;width:111px;">9</div><div class="c r n" style="left:960px;top:1191.2px;width:161px;">5<span class="cm">,</span>400</div><div class="c m" style="left:55px;top:1225.2px;width:151px;"><span class="hs">#########</span></div><div class="c r n" style="left:207px;top:1225.2px;width:129px;padding-right:5px;">1001</div><div class="c l" style="left:337px;top:1225.2px;width:99px;">小田中</div><div class="c r n" style="left:437px;top:1225.2px;width:71px;padding-right:5px;">102</div><div class="c l" style="left:509px;top:1225.2px;width:241px;overflow:visible;">名刺<span class="dg">100</span>枚<span class="k2">セット</span><span class="la">B</span></div><div class="c r n" style="left:751px;top:1225.2px;width:96px;">6<span class="cm">,</span>800</div><div class="c r n" style="left:848px;top:1225.2px;width:111px;">1</div><div class="c r n" style="left:960px;top:1225.2px;width:161px;">6<span class="cm">,</span>800</div><div class="c l" style="left:1122px;top:69.2px;width:131px;">最大</div><div class="c r n" style="left:1254px;top:69.2px;width:189px;">145<span class="cm">,</span>000</div><div class="c l" style="left:1122px;top:103.2px;width:131px;">最小</div><div class="c r n" style="left:1254px;top:103.2px;width:189px;">240</div><div class="a" style="left:55px;top:67px;width:1067px;height:2px;background:#000"></div><div class="a" style="left:1605px;top:68px;width:291px;height:512px;border:2px solid #4472c4;border-width:2px 2px 2px 2px"></div><div class="a" style="left:1602px;top:65px;width:7px;height:7px;background:#4472c4;border:1px solid #fff"></div><div class="a" style="left:1892px;top:65px;width:7px;height:7px;background:#4472c4;border:1px solid #fff"></div><div class="a" style="left:1602px;top:575px;width:7px;height:7px;background:#4472c4;border:1px solid #fff"></div><div class="a" style="left:1892px;top:575px;width:7px;height:7px;background:#4472c4;border:1px solid #fff"></div><svg class="a" style="left:1176px;top:592px" width="1064" height="600" viewBox="1176 983 1064 600"><rect x="1188.300" y="995.300" width="960.800" height="577" fill="#fff" stroke="#8e8e8e" stroke-width="1.800"/><text x="1668.500" y="1054" text-anchor="middle" font-size="37.300" fill="#595959" stroke="#595959" stroke-width=".400" font-family="'Noto Sans CJK JP',sans-serif" textLength="220" lengthAdjust="spacingAndGlyphs">グラフ タイトル</text><path d="M1318.200 1444.6L1331.500 1434.4H2099" fill="none" stroke="#d9d9d9" stroke-width="2.400"/><text x="1296.500" y="1452.4" text-anchor="end" font-size="24" fill="#595959" font-family="Carlito,'Liberation Sans',sans-serif" textLength="12.2" lengthAdjust="spacingAndGlyphs">0</text><path d="M1318.200 1403.5L1331.500 1393.3H2099" fill="none" stroke="#d9d9d9" stroke-width="2.400"/><text x="1296.500" y="1411.3" text-anchor="end" font-size="24" fill="#595959" font-family="Carlito,'Liberation Sans',sans-serif" textLength="60.8" lengthAdjust="spacingAndGlyphs">20000</text><path d="M1318.200 1362.4L1331.500 1352.2H2099" fill="none" stroke="#d9d9d9" stroke-width="2.400"/><text x="1296.500" y="1370.2" text-anchor="end" font-size="24" fill="#595959" font-family="Carlito,'Liberation Sans',sans-serif" textLength="60.8" lengthAdjust="spacingAndGlyphs">40000</text><path d="M1318.200 1321.3L1331.500 1311.1H2099" fill="none" stroke="#d9d9d9" stroke-width="2.400"/><text x="1296.500" y="1329.1" text-anchor="end" font-size="24" fill="#595959" font-family="Carlito,'Liberation Sans',sans-serif" textLength="60.8" lengthAdjust="spacingAndGlyphs">60000</text><path d="M1318.200 1280.2L1331.500 1270.0H2099" fill="none" stroke="#d9d9d9" stroke-width="2.400"/><text x="1296.500" y="1288.0" text-anchor="end" font-size="24" fill="#595959" font-family="Carlito,'Liberation Sans',sans-serif" textLength="60.8" lengthAdjust="spacingAndGlyphs">80000</text><path d="M1318.200 1239.1L1331.500 1228.9H2099" fill="none" stroke="#d9d9d9" stroke-width="2.400"/><text x="1296.500" y="1246.9" text-anchor="end" font-size="24" fill="#595959" font-family="Carlito,'Liberation Sans',sans-serif" textLength="73.0" lengthAdjust="spacingAndGlyphs">100000</text><path d="M1318.200 1198.0L1331.500 1187.8H2099" fill="none" stroke="#d9d9d9" stroke-width="2.400"/><text x="1296.500" y="1205.8" text-anchor="end" font-size="24" fill="#595959" font-family="Carlito,'Liberation Sans',sans-serif" textLength="73.0" lengthAdjust="spacingAndGlyphs">120000</text><path d="M1318.200 1156.9L1331.500 1146.7H2099" fill="none" stroke="#d9d9d9" stroke-width="2.400"/><text x="1296.500" y="1164.7" text-anchor="end" font-size="24" fill="#595959" font-family="Carlito,'Liberation Sans',sans-serif" textLength="73.0" lengthAdjust="spacingAndGlyphs">140000</text><path d="M1318.200 1115.8L1331.500 1105.6H2099" fill="none" stroke="#d9d9d9" stroke-width="2.400"/><text x="1296.500" y="1123.6" text-anchor="end" font-size="24" fill="#595959" font-family="Carlito,'Liberation Sans',sans-serif" textLength="73.0" lengthAdjust="spacingAndGlyphs">160000</text><path d="M1348.5 1440.8H1363.6L1368.0 1437.3H1353.2Z" fill="#8f3532"/><path d="M1348.5 1440.8V1420.2L1353.2 1416.7V1437.3Z" fill="#32537f"/><path d="M1334.1 1420.2L1338.8 1416.7H1353.2L1348.5 1420.2Z" fill="#3c6497"/><rect x="1334.1" y="1420.2" width="14.400" height="20.6" fill="#4f81bd"/><text x="1344.7" y="1482.300" text-anchor="middle" font-size="24" fill="#595959" font-family="Carlito,'Liberation Sans',sans-serif" textLength="12.2" lengthAdjust="spacingAndGlyphs">1</text><path d="M1399.6 1440.8H1414.7L1419.1 1437.3H1404.3Z" fill="#8f3532"/><path d="M1399.6 1440.8V1399.6L1404.3 1396.1V1437.3Z" fill="#32537f"/><path d="M1385.2 1399.6L1389.9 1396.1H1404.3L1399.6 1399.6Z" fill="#3c6497"/><rect x="1385.2" y="1399.6" width="14.400" height="41.2" fill="#4f81bd"/><text x="1395.8" y="1482.300" text-anchor="middle" font-size="24" fill="#595959" font-family="Carlito,'Liberation Sans',sans-serif" textLength="12.2" lengthAdjust="spacingAndGlyphs">2</text><path d="M1450.6 1440.8H1465.7L1470.1 1437.3H1455.3Z" fill="#8f3532"/><path d="M1450.6 1440.8V1379.0L1455.3 1375.5V1437.3Z" fill="#32537f"/><path d="M1436.2 1379.0L1440.9 1375.5H1455.3L1450.6 1379.0Z" fill="#3c6497"/><rect x="1436.2" y="1379.0" width="14.400" height="61.8" fill="#4f81bd"/><text x="1446.8" y="1482.300" text-anchor="middle" font-size="24" fill="#595959" font-family="Carlito,'Liberation Sans',sans-serif" textLength="12.2" lengthAdjust="spacingAndGlyphs">3</text><path d="M1501.7 1440.8H1516.8L1521.2 1437.3H1506.4Z" fill="#8f3532"/><path d="M1501.7 1440.8V1358.4L1506.4 1354.9V1437.3Z" fill="#32537f"/><path d="M1487.3 1358.4L1492.0 1354.9H1506.4L1501.7 1358.4Z" fill="#3c6497"/><rect x="1487.3" y="1358.4" width="14.400" height="82.4" fill="#4f81bd"/><text x="1497.9" y="1482.300" text-anchor="middle" font-size="24" fill="#595959" font-family="Carlito,'Liberation Sans',sans-serif" textLength="12.2" lengthAdjust="spacingAndGlyphs">4</text><path d="M1552.8 1440.8H1567.9L1572.3 1437.3H1557.5Z" fill="#8f3532"/><path d="M1552.8 1440.8V1337.8L1557.5 1334.3V1437.3Z" fill="#32537f"/><path d="M1538.4 1337.8L1543.1 1334.3H1557.5L1552.8 1337.8Z" fill="#3c6497"/><rect x="1538.4" y="1337.8" width="14.400" height="103.0" fill="#4f81bd"/><text x="1549.0" y="1482.300" text-anchor="middle" font-size="24" fill="#595959" font-family="Carlito,'Liberation Sans',sans-serif" textLength="12.2" lengthAdjust="spacingAndGlyphs">5</text><path d="M1603.8 1440.8H1618.9L1623.3 1437.3H1608.5Z" fill="#8f3532"/><path d="M1603.8 1440.8V1317.3L1608.5 1313.8V1437.3Z" fill="#32537f"/><path d="M1589.4 1317.3L1594.1 1313.8H1608.5L1603.8 1317.3Z" fill="#3c6497"/><rect x="1589.4" y="1317.3" width="14.400" height="123.5" fill="#4f81bd"/><text x="1600.0" y="1482.300" text-anchor="middle" font-size="24" fill="#595959" font-family="Carlito,'Liberation Sans',sans-serif" textLength="12.2" lengthAdjust="spacingAndGlyphs">6</text><path d="M1654.9 1440.8H1670.0L1674.4 1437.3H1659.6Z" fill="#8f3532"/><path d="M1654.9 1440.8V1296.7L1659.6 1293.2V1437.3Z" fill="#32537f"/><path d="M1640.5 1296.7L1645.2 1293.2H1659.6L1654.9 1296.7Z" fill="#3c6497"/><rect x="1640.5" y="1296.7" width="14.400" height="144.1" fill="#4f81bd"/><text x="1651.1" y="1482.300" text-anchor="middle" font-size="24" fill="#595959" font-family="Carlito,'Liberation Sans',sans-serif" textLength="12.2" lengthAdjust="spacingAndGlyphs">7</text><path d="M1706.0 1440.8H1721.1L1725.5 1437.3H1710.7Z" fill="#8f3532"/><path d="M1706.0 1440.8V1276.1L1710.7 1272.6V1437.3Z" fill="#32537f"/><path d="M1691.6 1276.1L1696.3 1272.6H1710.7L1706.0 1276.1Z" fill="#3c6497"/><rect x="1691.6" y="1276.1" width="14.400" height="164.7" fill="#4f81bd"/><text x="1702.2" y="1482.300" text-anchor="middle" font-size="24" fill="#595959" font-family="Carlito,'Liberation Sans',sans-serif" textLength="12.2" lengthAdjust="spacingAndGlyphs">8</text><path d="M1757.1 1440.8H1772.2L1776.6 1437.3H1761.8Z" fill="#8f3532"/><path d="M1757.1 1440.8V1255.5L1761.8 1252.0V1437.3Z" fill="#32537f"/><path d="M1742.7 1255.5L1747.4 1252.0H1761.8L1757.1 1255.5Z" fill="#3c6497"/><rect x="1742.7" y="1255.5" width="14.400" height="185.3" fill="#4f81bd"/><text x="1753.3" y="1482.300" text-anchor="middle" font-size="24" fill="#595959" font-family="Carlito,'Liberation Sans',sans-serif" textLength="12.2" lengthAdjust="spacingAndGlyphs">9</text><path d="M1808.1 1440.8H1823.2L1827.6 1437.3H1812.8Z" fill="#8f3532"/><path d="M1808.1 1440.8V1234.9L1812.8 1231.4V1437.3Z" fill="#32537f"/><path d="M1793.7 1234.9L1798.4 1231.4H1812.8L1808.1 1234.9Z" fill="#3c6497"/><rect x="1793.7" y="1234.9" width="14.400" height="205.9" fill="#4f81bd"/><text x="1804.3" y="1482.300" text-anchor="middle" font-size="24" fill="#595959" font-family="Carlito,'Liberation Sans',sans-serif" textLength="24.3" lengthAdjust="spacingAndGlyphs">10</text><path d="M1859.2 1440.8H1874.3L1878.7 1437.3H1863.9Z" fill="#8f3532"/><path d="M1859.2 1440.8V1214.3L1863.9 1210.8V1437.3Z" fill="#32537f"/><path d="M1844.8 1214.3L1849.5 1210.8H1863.9L1859.2 1214.3Z" fill="#3c6497"/><rect x="1844.8" y="1214.3" width="14.400" height="226.5" fill="#4f81bd"/><text x="1855.4" y="1482.300" text-anchor="middle" font-size="24" fill="#595959" font-family="Carlito,'Liberation Sans',sans-serif" textLength="24.3" lengthAdjust="spacingAndGlyphs">11</text><path d="M1910.3 1440.8H1925.4L1929.8 1437.3H1915.0Z" fill="#8f3532"/><path d="M1910.3 1440.8V1193.7L1915.0 1190.2V1437.3Z" fill="#32537f"/><path d="M1895.9 1193.7L1900.6 1190.2H1915.0L1910.3 1193.7Z" fill="#3c6497"/><rect x="1895.9" y="1193.7" width="14.400" height="247.1" fill="#4f81bd"/><text x="1906.5" y="1482.300" text-anchor="middle" font-size="24" fill="#595959" font-family="Carlito,'Liberation Sans',sans-serif" textLength="24.3" lengthAdjust="spacingAndGlyphs">12</text><path d="M1961.3 1440.8H1976.4L1980.8 1437.3H1966.0Z" fill="#8f3532"/><path d="M1961.3 1440.8V1173.1L1966.0 1169.6V1437.3Z" fill="#32537f"/><path d="M1946.9 1173.1L1951.6 1169.6H1966.0L1961.3 1173.1Z" fill="#3c6497"/><rect x="1946.9" y="1173.1" width="14.400" height="267.7" fill="#4f81bd"/><text x="1957.5" y="1482.300" text-anchor="middle" font-size="24" fill="#595959" font-family="Carlito,'Liberation Sans',sans-serif" textLength="24.3" lengthAdjust="spacingAndGlyphs">13</text><path d="M2012.4 1440.8H2027.5L2031.9 1437.3H2017.1Z" fill="#8f3532"/><path d="M2012.4 1440.8V1152.5L2017.1 1149.0V1437.3Z" fill="#32537f"/><path d="M1998.0 1152.5L2002.7 1149.0H2017.1L2012.4 1152.5Z" fill="#3c6497"/><rect x="1998.0" y="1152.5" width="14.400" height="288.3" fill="#4f81bd"/><text x="2008.6" y="1482.300" text-anchor="middle" font-size="24" fill="#595959" font-family="Carlito,'Liberation Sans',sans-serif" textLength="24.3" lengthAdjust="spacingAndGlyphs">14</text><path d="M2063.5 1440.8H2078.6L2083.0 1437.3H2068.2Z" fill="#8f3532"/><path d="M2063.5 1440.8V1131.9L2068.2 1128.4V1437.3Z" fill="#32537f"/><path d="M2049.1 1131.9L2053.8 1128.4H2068.2L2063.5 1131.9Z" fill="#3c6497"/><rect x="2049.1" y="1131.9" width="14.400" height="308.9" fill="#4f81bd"/><text x="2059.7" y="1482.300" text-anchor="middle" font-size="24" fill="#595959" font-family="Carlito,'Liberation Sans',sans-serif" textLength="24.3" lengthAdjust="spacingAndGlyphs">15</text><rect x="1584.800" y="1526.600" width="12.800" height="13" fill="#4f81bd"/><text x="1604.500" y="1539.500" font-size="24" fill="#595959" font-family="'Noto Sans CJK JP',sans-serif">系列<tspan font-family="Carlito,'Liberation Sans',sans-serif">1</tspan></text><rect x="1683" y="1526.600" width="12.800" height="13" fill="#c0504d"/><text x="1702.800" y="1539.500" font-size="24" fill="#595959" font-family="'Noto Sans CJK JP',sans-serif">系列<tspan font-family="Carlito,'Liberation Sans',sans-serif">2</tspan></text><circle cx="1188.8" cy="996.0" r="9.300" fill="#fff" stroke="#8e8e8e" stroke-width="2.900"/><circle cx="1188.8" cy="1284.2" r="9.300" fill="#fff" stroke="#8e8e8e" stroke-width="2.900"/><circle cx="1188.8" cy="1572.5" r="9.300" fill="#fff" stroke="#8e8e8e" stroke-width="2.900"/><circle cx="1668.5" cy="996.0" r="9.300" fill="#fff" stroke="#8e8e8e" stroke-width="2.900"/><circle cx="1668.5" cy="1572.5" r="9.300" fill="#fff" stroke="#8e8e8e" stroke-width="2.900"/><circle cx="2149.3" cy="996.0" r="9.300" fill="#fff" stroke="#8e8e8e" stroke-width="2.900"/><circle cx="2149.3" cy="1284.2" r="9.300" fill="#fff" stroke="#8e8e8e" stroke-width="2.900"/><circle cx="2149.3" cy="1572.5" r="9.300" fill="#fff" stroke="#8e8e8e" stroke-width="2.900"/><rect x="2172.600" y="995.800" width="55" height="54.600" fill="#fff" stroke="#a6a6a6" stroke-width="1.300"/><path d="M2184 1019H2194V1009.200H2202V1019H2212V1027H2202V1037H2194V1027H2184Z" fill="#76a797"/><rect x="2172.600" y="1072.200" width="55" height="54" fill="#fff" stroke="#e1e1e1" stroke-width="1.200"/><g transform="translate(2130,980) scale(.14434)" fill="#b1afb1"><path d="M588 705V772L541 812L518 794Z"/><path d="M510 800L533 820L505 846L482 826Z"/><path d="M360 927C410 905 420 850 450 842C480 836 500 862 492 890C482 915 460 927 440 927Z"/><ellipse cx="462" cy="868" rx="20" ry="28" transform="rotate(-35 462 868)" fill="#efecf0"/></g><rect x="2172.600" y="1147.800" width="55" height="54.600" fill="#fff" stroke="#e1e1e1" stroke-width="1.200"/><g transform="translate(2130,980) scale(.14434)"><path d="M325 1207H610V1236L492 1352V1488H443V1352L325 1226Z" fill="#b3b1b3"/><path d="M333 1218L460 1345V1478" fill="none" stroke="#f4f2f4" stroke-width="7"/></g></svg><div class="a" style="left:2257px;top:0;width:1px;height:1250px;background:#a0a0a0"></div><div class="a" style="left:2258px;top:0;width:38px;height:1250px;background:#dcdcdc"></div><div class="a" style="left:2260px;top:1px;width:33px;height:33px;background:#fff;border:1px solid #c8c8c8"></div><svg class="a" style="left:2267px;top:11px" width="20" height="12"><path d="M1 10.500H19L10 1.500Z" fill="#7a7a7a"/></svg><div class="a" style="left:2260px;top:35px;width:33px;height:80px;background:#fff;border:1px solid #c8c8c8"></div><div class="a" style="left:2261px;top:1219px;width:32px;height:31px;background:#fff;border:1px solid #c8c8c8"></div><svg class="a" style="left:2269px;top:1230px" width="16" height="10"><path d="M0 1H16L8 9Z" fill="#606060"/></svg></div><div class="a" style="left:1px;top:1641px;width:2295px;height:41px;background:#e6e6e6;border-top:1px solid #b0b0b0"></div><svg class="a" style="left:30px;top:1653px" width="60" height="22"><path d="M13 3V19L4 11Z" fill="#c6c6c6"/><path d="M44 3V19L53 11Z" fill="#c6c6c6"/></svg><div class="a" style="left:140px;top:1645px;width:1px;height:33px;background:#b6b6b6"></div><div class="a" style="left:263px;top:1641px;width:133px;height:38px;background:#fff;border-bottom:2.500px solid #217346;border-left:1px solid #c6c6c6;border-right:1px solid #c6c6c6"></div><div class="a" style="left:518px;top:1645px;width:1px;height:33px;background:#b6b6b6"></div><div class="a" style="left:640px;top:1645px;width:1px;height:33px;background:#b6b6b6"></div><div class="t ui" style="left:101px;top:1644px;width:200px;text-align:center;font-size:28px;color:#444">Sheet3</div><div class="t ui" style="left:229px;top:1644px;width:200px;text-align:center;font-size:28px;color:#217346">集計処理</div><div class="t ui" style="left:356px;top:1644px;width:200px;text-align:center;font-size:28px;color:#444">Sheet2</div><div class="t ui" style="left:478px;top:1644px;width:200px;text-align:center;font-size:28px;color:#444">Sheet1</div><svg class="a" style="left:686px;top:1647px" width="34" height="34"><circle cx="17" cy="17" r="14.500" fill="none" stroke="#6a6a6a" stroke-width="1.800"/><path d="M9.500 17H24.500M17 9.500V24.500" stroke="#6a6a6a" stroke-width="3"/></svg><div class="a" style="left:1373px;top:1652px;width:4px;height:4px;background:#b9b9b9;box-shadow:0 8px 0 #b9b9b9,0 16px 0 #b9b9b9"></div><div class="a" style="left:1397px;top:1645px;width:861px;height:33px;background:#dcdcdc"></div><div class="a" style="left:1397px;top:1645px;width:33px;height:33px;background:#fff;border:1px solid #c8c8c8"></div><div class="a" style="left:1430px;top:1645px;width:754px;height:33px;background:#fff;border:1px solid #c8c8c8"></div><div class="a" style="left:2226px;top:1645px;width:33px;height:33px;background:#fff;border:1px solid #c8c8c8"></div><svg class="a" style="left:1407px;top:1653px" width="12" height="18"><path d="M10.500 1V17L1.500 9Z" fill="#606060"/></svg><svg class="a" style="left:2236px;top:1653px" width="12" height="18"><path d="M1.500 1V17L10.500 9Z" fill="#606060"/></svg><div class="a" style="left:1px;top:1682px;width:2295px;height:43px;background:#f1f1f1;border-top:1px solid #d0d0d0"></div><div class="t ui" style="left:10px;top:1691px;font-size:24px;color:#555">準備完了</div><div class="t ui" style="left:1150px;top:1691px;font-size:24px;color:#555">平均:</div><div class="t" style="left:1216px;top:1692.500px;font-size:23.500px;color:#555;font-family:'DejaVu Sans','Noto Sans CJK JP',sans-serif">40015.06667</div><div class="t ui" style="left:1389.500px;top:1691px;font-size:24px;color:#555"><span class="k" style="width:76.0px;transform:scaleX(0.792)">データの</span>個数:</div><div class="t" style="left:1532.500px;top:1692.500px;font-size:23.500px;color:#555;font-family:'DejaVu Sans','Noto Sans CJK JP',sans-serif">30</div><div class="t ui" style="left:1579px;top:1691px;font-size:24px;color:#555">合計:</div><div class="t" style="left:1646px;top:1692.500px;font-size:23.500px;color:#555;font-family:'DejaVu Sans','Noto Sans CJK JP',sans-serif">1200452</div><div class="a" style="left:1775px;top:1683px;width:52px;height:42px;background:#c6c6c6"></div><svg class="a" style="left:1787px;top:1691px" width="28" height="26"><rect x="1" y="1" width="26" height="24" fill="none" stroke="#6a6a6a" stroke-width="1.4"/><path d="M1 9H27M1 17H27M10 1V25M19 1V25" stroke="#6a6a6a" stroke-width="1.2"/></svg><svg class="a" style="left:1839px;top:1691px" width="28" height="26"><rect x="1" y="1" width="26" height="24" fill="none" stroke="#777" stroke-width="1.4"/><rect x="7.5" y="6.5" width="13" height="15" fill="none" stroke="#777" stroke-width="1.2"/><path d="M10 10.5H18M10 14H18M10 17.5H18" stroke="#777" stroke-width="1.1"/></svg><svg class="a" style="left:1891px;top:1691px" width="28" height="26"><rect x="1" y="1" width="26" height="24" fill="none" stroke="#777" stroke-width="1.4"/><path d="M10 1V14H1M19 1V14H10" fill="none" stroke="#777" stroke-width="1.2"/></svg><div class="a" style="left:1940px;top:1703px;width:12px;height:3px;background:#555"></div><div class="a" style="left:1960px;top:1704px;width:198px;height:1px;background:#8a8a8a"></div><div class="a" style="left:2056px;top:1693px;width:7px;height:22px;background:#555"></div><svg class="a" style="left:2166px;top:1696px" width="16" height="16"><path d="M1 8H15M8 1V15" stroke="#555" stroke-width="3"/></svg><div class="t" style="left:2197px;top:1692px;font-size:23.500px;color:#555;font-family:'DejaVu Sans','Noto Sans CJK JP',sans-serif">100%</div><div class="a" style="left:0;top:0;width:1px;height:1727px;background:#1e6b41"></div><div class="a" style="left:2296px;top:0;width:1px;height:1727px;background:#1e6b41"></div><div class="a" style="left:0;top:1725px;width:2297px;height:2px;background:#1e6b41"></div></body></html>
